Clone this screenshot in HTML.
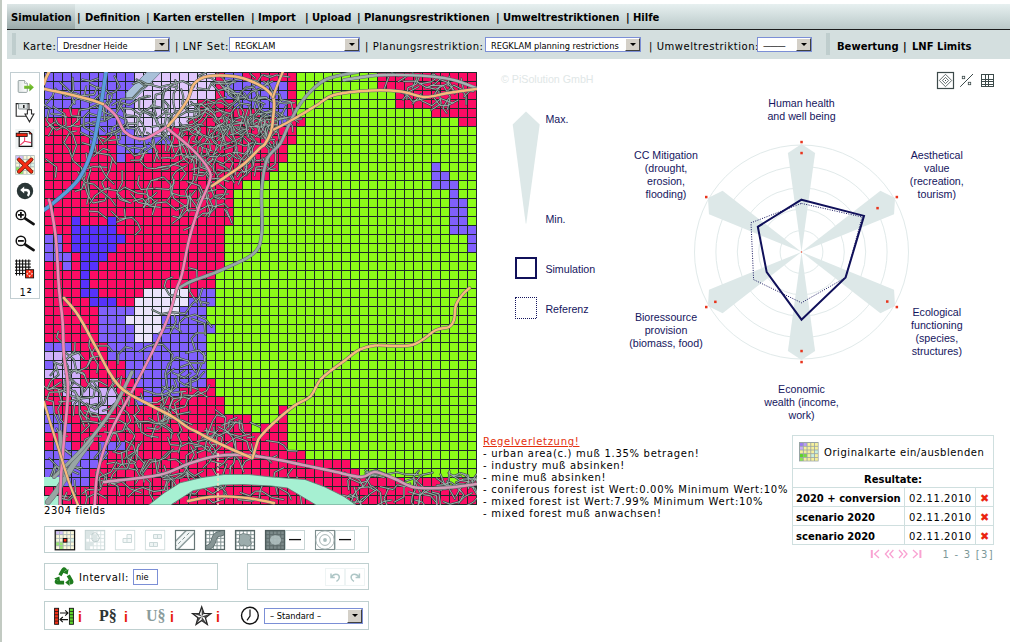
<!DOCTYPE html>
<html><head><meta charset="utf-8"><title>Simulation</title>
<style>
html,body{margin:0;padding:0;background:#fff;}
body{width:1010px;height:642px;position:relative;overflow:hidden;font-family:"DejaVu Sans",Verdana,sans-serif;font-size:10px;color:#000;}
.abs{position:absolute;}
.v{font-family:"DejaVu Sans",Verdana,sans-serif;font-size:10px;letter-spacing:0.55px;white-space:nowrap;line-height:12px;}
.vb{font-family:"DejaVu Sans",Verdana,sans-serif;font-weight:bold;font-size:10px;white-space:nowrap;line-height:12px;}
.t{font-family:"DejaVu Sans Condensed","DejaVu Sans",sans-serif;font-stretch:condensed;font-size:9.2px;white-space:nowrap;line-height:12px;}
#leftbar{left:0;top:0;width:2px;height:642px;background:#c2cac2;}
#menubar{left:7px;top:4px;width:1003px;height:25px;background:linear-gradient(#e7f0f0 0%,#d1dddd 48%,#bbc9c9 100%);border-bottom:1px solid #1c1c1c;}
#tab{left:0;top:0;width:68px;height:25px;background:linear-gradient(#dce6e6 0%,#bac6c6 50%,#9aaaaa 100%);}
#menubar>span{position:absolute;top:8px;}
#bar2{left:7px;top:30px;width:1003px;height:29px;background:#d4dfdf;}
#bar2>span{position:absolute;top:10.5px;}
.handle{position:absolute;top:3px;width:4px;height:22px;background-image:radial-gradient(circle,#9cb0b0 0.55px,transparent 0.8px);background-size:2px 2px;}
.sel{position:absolute;height:13px;background:#fff;border:1px solid #7b8fd6;box-sizing:content-box;overflow:hidden;}
.sel .txt{position:absolute;left:5px;top:1.5px;}
.sel .btn{position:absolute;right:0;top:0;width:15px;height:13px;background:#d4d0c8;border-top:1px solid #fff;border-left:1px solid #fff;border-right:1px solid #404040;border-bottom:1px solid #404040;box-sizing:border-box;}
.sel .btn:after{content:"";position:absolute;left:3.5px;top:4px;border-left:3px solid transparent;border-right:3px solid transparent;border-top:3px solid #000;}
.box{position:absolute;border:1px solid #bfd0d0;background:#fff;box-sizing:border-box;}
.redi{position:absolute;font-family:"Liberation Sans",Arial,sans-serif;font-weight:bold;font-size:14px;color:#e8200c;line-height:14px;margin-top:1.5px;}
table.res{position:absolute;left:792px;top:435px;border-collapse:collapse;}
table.res td{border:1px solid #cfdfdf;padding:0;}
table.res tr+tr span{position:relative;top:1.5px;}
.x{font-family:"DejaVu Sans",sans-serif;font-size:11px;line-height:12px;color:#ea2410;}
</style></head><body>
<div id="leftbar" class="abs"></div>
<div id="menubar" class="abs"><div id="tab" class="abs"></div>
<span class="vb" style="left:4px">Simulation</span><span class="vb" style="left:70px">|</span>
<span class="vb" style="left:78px">Definition</span><span class="vb" style="left:139px">|</span>
<span class="vb" style="left:146px">Karten erstellen</span><span class="vb" style="left:244px">|</span>
<span class="vb" style="left:251px">Import</span><span class="vb" style="left:298px">|</span>
<span class="vb" style="left:305px">Upload</span><span class="vb" style="left:350px">|</span>
<span class="vb" style="left:357px">Planungsrestriktionen</span><span class="vb" style="left:489px">|</span>
<span class="vb" style="left:496px">Umweltrestriktionen</span><span class="vb" style="left:619px">|</span>
<span class="vb" style="left:626px">Hilfe</span>
</div>
<div id="bar2" class="abs">
<div class="handle" style="left:5px"></div>
<span class="v" style="left:16px">Karte:</span>
<div class="sel" style="left:50px;top:7px;width:111px"><span class="t txt">Dresdner Heide</span><div class="btn"></div></div>
<span class="v" style="left:168px">| LNF Set:</span>
<div class="sel" style="left:222px;top:7px;width:129px"><span class="t txt">REGKLAM</span><div class="btn"></div></div>
<span class="v" style="left:358px">| Planungsrestriktion:</span>
<div class="sel" style="left:478px;top:7px;width:154px"><span class="t txt">REGKLAM planning restrictions</span><div class="btn"></div></div>
<span class="v" style="left:642px">| Umweltrestriktion:</span>
<div class="sel" style="left:750px;top:7px;width:53px"><span class="t txt" style="letter-spacing:-1px">———</span><div class="btn"></div></div>
<div class="handle" style="left:819px"></div>
<span class="vb" style="left:830px">Bewertung</span><span class="vb" style="left:896px">|</span><span class="vb" style="left:905px">LNF Limits</span>
</div>

<!-- left toolbar -->
<div class="box" style="left:10px;top:72px;width:30px;height:227px;border-color:#c2ced2"></div>

<svg id="map" width="433" height="433" viewBox="0 0 433 433" style="position:absolute;left:44px;top:72px">
<g shape-rendering="crispEdges">
<rect x="0" y="0" width="91" height="10" fill="#8060fc"/>
<rect x="90" y="0" width="82" height="10" fill="#e0c8fc"/>
<rect x="171" y="0" width="10" height="10" fill="#fc0c64"/>
<rect x="180" y="0" width="19" height="10" fill="#8060fc"/>
<rect x="198" y="0" width="55" height="10" fill="#fc0c64"/>
<rect x="252" y="0" width="82" height="10" fill="#8cfc18"/>
<rect x="333" y="0" width="100" height="10" fill="#fc0c64"/>
<rect x="0" y="9" width="91" height="10" fill="#8060fc"/>
<rect x="90" y="9" width="82" height="10" fill="#e0c8fc"/>
<rect x="171" y="9" width="10" height="10" fill="#fc0c64"/>
<rect x="180" y="9" width="64" height="10" fill="#8060fc"/>
<rect x="243" y="9" width="10" height="10" fill="#fc0c64"/>
<rect x="252" y="9" width="82" height="10" fill="#8cfc18"/>
<rect x="333" y="9" width="100" height="10" fill="#fc0c64"/>
<rect x="0" y="18" width="91" height="10" fill="#8060fc"/>
<rect x="90" y="18" width="82" height="10" fill="#e0c8fc"/>
<rect x="171" y="18" width="10" height="10" fill="#fc0c64"/>
<rect x="180" y="18" width="64" height="10" fill="#8060fc"/>
<rect x="243" y="18" width="10" height="10" fill="#fc0c64"/>
<rect x="252" y="18" width="100" height="10" fill="#8cfc18"/>
<rect x="351" y="18" width="82" height="10" fill="#fc0c64"/>
<rect x="0" y="27" width="91" height="10" fill="#8060fc"/>
<rect x="90" y="27" width="64" height="10" fill="#e0c8fc"/>
<rect x="153" y="27" width="37" height="10" fill="#fc0c64"/>
<rect x="189" y="27" width="55" height="10" fill="#8060fc"/>
<rect x="243" y="27" width="10" height="10" fill="#fc0c64"/>
<rect x="252" y="27" width="100" height="10" fill="#8cfc18"/>
<rect x="351" y="27" width="82" height="10" fill="#fc0c64"/>
<rect x="0" y="36" width="19" height="10" fill="#8060fc"/>
<rect x="18" y="36" width="19" height="10" fill="#fc0c64"/>
<rect x="36" y="36" width="46" height="10" fill="#8060fc"/>
<rect x="81" y="36" width="73" height="10" fill="#e0c8fc"/>
<rect x="153" y="36" width="64" height="10" fill="#fc0c64"/>
<rect x="216" y="36" width="28" height="10" fill="#8060fc"/>
<rect x="243" y="36" width="10" height="10" fill="#fc0c64"/>
<rect x="252" y="36" width="136" height="10" fill="#8cfc18"/>
<rect x="387" y="36" width="46" height="10" fill="#fc0c64"/>
<rect x="0" y="45" width="37" height="10" fill="#fc0c64"/>
<rect x="36" y="45" width="46" height="10" fill="#8060fc"/>
<rect x="81" y="45" width="64" height="10" fill="#e0c8fc"/>
<rect x="144" y="45" width="91" height="10" fill="#fc0c64"/>
<rect x="234" y="45" width="10" height="10" fill="#8060fc"/>
<rect x="243" y="45" width="19" height="10" fill="#fc0c64"/>
<rect x="261" y="45" width="154" height="10" fill="#8cfc18"/>
<rect x="414" y="45" width="19" height="10" fill="#fc0c64"/>
<rect x="0" y="54" width="37" height="10" fill="#fc0c64"/>
<rect x="36" y="54" width="55" height="10" fill="#8060fc"/>
<rect x="90" y="54" width="37" height="10" fill="#e0c8fc"/>
<rect x="126" y="54" width="127" height="10" fill="#fc0c64"/>
<rect x="252" y="54" width="181" height="10" fill="#8cfc18"/>
<rect x="0" y="63" width="46" height="10" fill="#fc0c64"/>
<rect x="45" y="63" width="10" height="10" fill="#8060fc"/>
<rect x="54" y="63" width="19" height="10" fill="#fc0c64"/>
<rect x="72" y="63" width="55" height="10" fill="#8060fc"/>
<rect x="126" y="63" width="127" height="10" fill="#fc0c64"/>
<rect x="252" y="63" width="181" height="10" fill="#8cfc18"/>
<rect x="0" y="72" width="73" height="10" fill="#fc0c64"/>
<rect x="72" y="72" width="37" height="10" fill="#8060fc"/>
<rect x="108" y="72" width="136" height="10" fill="#fc0c64"/>
<rect x="243" y="72" width="190" height="10" fill="#8cfc18"/>
<rect x="0" y="81" width="73" height="10" fill="#fc0c64"/>
<rect x="72" y="81" width="10" height="10" fill="#8060fc"/>
<rect x="81" y="81" width="163" height="10" fill="#fc0c64"/>
<rect x="243" y="81" width="190" height="10" fill="#8cfc18"/>
<rect x="0" y="90" width="235" height="10" fill="#fc0c64"/>
<rect x="234" y="90" width="154" height="10" fill="#8cfc18"/>
<rect x="387" y="90" width="10" height="10" fill="#8060fc"/>
<rect x="396" y="90" width="37" height="10" fill="#8cfc18"/>
<rect x="0" y="99" width="226" height="10" fill="#fc0c64"/>
<rect x="225" y="99" width="163" height="10" fill="#8cfc18"/>
<rect x="387" y="99" width="19" height="10" fill="#8060fc"/>
<rect x="405" y="99" width="28" height="10" fill="#8cfc18"/>
<rect x="0" y="108" width="199" height="10" fill="#fc0c64"/>
<rect x="198" y="108" width="190" height="10" fill="#8cfc18"/>
<rect x="387" y="108" width="28" height="10" fill="#8060fc"/>
<rect x="414" y="108" width="19" height="10" fill="#8cfc18"/>
<rect x="0" y="117" width="190" height="10" fill="#fc0c64"/>
<rect x="189" y="117" width="217" height="10" fill="#8cfc18"/>
<rect x="405" y="117" width="10" height="10" fill="#8060fc"/>
<rect x="414" y="117" width="19" height="10" fill="#8cfc18"/>
<rect x="0" y="126" width="190" height="10" fill="#fc0c64"/>
<rect x="189" y="126" width="217" height="10" fill="#8cfc18"/>
<rect x="405" y="126" width="19" height="10" fill="#8060fc"/>
<rect x="423" y="126" width="10" height="10" fill="#8cfc18"/>
<rect x="0" y="135" width="190" height="10" fill="#fc0c64"/>
<rect x="189" y="135" width="217" height="10" fill="#8cfc18"/>
<rect x="405" y="135" width="19" height="10" fill="#8060fc"/>
<rect x="423" y="135" width="10" height="10" fill="#8cfc18"/>
<rect x="0" y="144" width="28" height="10" fill="#fc0c64"/>
<rect x="27" y="144" width="10" height="10" fill="#5632fc"/>
<rect x="36" y="144" width="28" height="10" fill="#fc0c64"/>
<rect x="63" y="144" width="10" height="10" fill="#5632fc"/>
<rect x="72" y="144" width="118" height="10" fill="#fc0c64"/>
<rect x="189" y="144" width="217" height="10" fill="#8cfc18"/>
<rect x="405" y="144" width="19" height="10" fill="#8060fc"/>
<rect x="423" y="144" width="10" height="10" fill="#8cfc18"/>
<rect x="0" y="153" width="28" height="10" fill="#fc0c64"/>
<rect x="27" y="153" width="46" height="10" fill="#5632fc"/>
<rect x="72" y="153" width="109" height="10" fill="#fc0c64"/>
<rect x="180" y="153" width="226" height="10" fill="#8cfc18"/>
<rect x="405" y="153" width="28" height="10" fill="#8060fc"/>
<rect x="0" y="162" width="19" height="10" fill="#8060fc"/>
<rect x="18" y="162" width="10" height="10" fill="#fc0c64"/>
<rect x="27" y="162" width="55" height="10" fill="#5632fc"/>
<rect x="81" y="162" width="100" height="10" fill="#fc0c64"/>
<rect x="180" y="162" width="244" height="10" fill="#8cfc18"/>
<rect x="423" y="162" width="10" height="10" fill="#8060fc"/>
<rect x="0" y="171" width="19" height="10" fill="#8060fc"/>
<rect x="18" y="171" width="10" height="10" fill="#fc0c64"/>
<rect x="27" y="171" width="46" height="10" fill="#5632fc"/>
<rect x="72" y="171" width="109" height="10" fill="#fc0c64"/>
<rect x="180" y="171" width="244" height="10" fill="#8cfc18"/>
<rect x="423" y="171" width="10" height="10" fill="#8060fc"/>
<rect x="0" y="180" width="28" height="10" fill="#8060fc"/>
<rect x="27" y="180" width="10" height="10" fill="#fc0c64"/>
<rect x="36" y="180" width="28" height="10" fill="#5632fc"/>
<rect x="63" y="180" width="118" height="10" fill="#fc0c64"/>
<rect x="180" y="180" width="253" height="10" fill="#8cfc18"/>
<rect x="0" y="189" width="19" height="10" fill="#fc0c64"/>
<rect x="18" y="189" width="10" height="10" fill="#8060fc"/>
<rect x="27" y="189" width="10" height="10" fill="#fc0c64"/>
<rect x="36" y="189" width="19" height="10" fill="#5632fc"/>
<rect x="54" y="189" width="127" height="10" fill="#fc0c64"/>
<rect x="180" y="189" width="253" height="10" fill="#8cfc18"/>
<rect x="0" y="198" width="37" height="10" fill="#fc0c64"/>
<rect x="36" y="198" width="10" height="10" fill="#5632fc"/>
<rect x="45" y="198" width="127" height="10" fill="#fc0c64"/>
<rect x="171" y="198" width="262" height="10" fill="#8cfc18"/>
<rect x="0" y="207" width="37" height="10" fill="#fc0c64"/>
<rect x="36" y="207" width="10" height="10" fill="#5632fc"/>
<rect x="45" y="207" width="127" height="10" fill="#fc0c64"/>
<rect x="171" y="207" width="262" height="10" fill="#8cfc18"/>
<rect x="0" y="216" width="37" height="10" fill="#fc0c64"/>
<rect x="36" y="216" width="19" height="10" fill="#5632fc"/>
<rect x="54" y="216" width="46" height="10" fill="#fc0c64"/>
<rect x="99" y="216" width="46" height="10" fill="#ece4fc"/>
<rect x="144" y="216" width="10" height="10" fill="#fc0c64"/>
<rect x="153" y="216" width="19" height="10" fill="#8060fc"/>
<rect x="171" y="216" width="262" height="10" fill="#8cfc18"/>
<rect x="0" y="225" width="46" height="10" fill="#fc0c64"/>
<rect x="45" y="225" width="28" height="10" fill="#5632fc"/>
<rect x="72" y="225" width="19" height="10" fill="#fc0c64"/>
<rect x="90" y="225" width="55" height="10" fill="#ece4fc"/>
<rect x="144" y="225" width="28" height="10" fill="#8060fc"/>
<rect x="171" y="225" width="262" height="10" fill="#8cfc18"/>
<rect x="0" y="234" width="55" height="10" fill="#fc0c64"/>
<rect x="54" y="234" width="37" height="10" fill="#8060fc"/>
<rect x="90" y="234" width="46" height="10" fill="#ece4fc"/>
<rect x="135" y="234" width="28" height="10" fill="#8060fc"/>
<rect x="162" y="234" width="271" height="10" fill="#8cfc18"/>
<rect x="0" y="243" width="55" height="10" fill="#fc0c64"/>
<rect x="54" y="243" width="28" height="10" fill="#8060fc"/>
<rect x="81" y="243" width="37" height="10" fill="#ece4fc"/>
<rect x="117" y="243" width="46" height="10" fill="#8060fc"/>
<rect x="162" y="243" width="271" height="10" fill="#8cfc18"/>
<rect x="0" y="252" width="55" height="10" fill="#fc0c64"/>
<rect x="54" y="252" width="37" height="10" fill="#8060fc"/>
<rect x="90" y="252" width="28" height="10" fill="#ece4fc"/>
<rect x="117" y="252" width="55" height="10" fill="#8060fc"/>
<rect x="171" y="252" width="262" height="10" fill="#8cfc18"/>
<rect x="0" y="261" width="55" height="10" fill="#fc0c64"/>
<rect x="54" y="261" width="37" height="10" fill="#8060fc"/>
<rect x="90" y="261" width="19" height="10" fill="#ece4fc"/>
<rect x="108" y="261" width="55" height="10" fill="#8060fc"/>
<rect x="162" y="261" width="271" height="10" fill="#8cfc18"/>
<rect x="0" y="270" width="28" height="10" fill="#8060fc"/>
<rect x="27" y="270" width="37" height="10" fill="#fc0c64"/>
<rect x="63" y="270" width="100" height="10" fill="#8060fc"/>
<rect x="162" y="270" width="271" height="10" fill="#8cfc18"/>
<rect x="0" y="279" width="37" height="10" fill="#d0b0fc"/>
<rect x="36" y="279" width="28" height="10" fill="#fc0c64"/>
<rect x="63" y="279" width="100" height="10" fill="#8060fc"/>
<rect x="162" y="279" width="271" height="10" fill="#8cfc18"/>
<rect x="0" y="288" width="10" height="10" fill="#8060fc"/>
<rect x="9" y="288" width="28" height="10" fill="#d0b0fc"/>
<rect x="36" y="288" width="46" height="10" fill="#fc0c64"/>
<rect x="81" y="288" width="82" height="10" fill="#8060fc"/>
<rect x="162" y="288" width="271" height="10" fill="#8cfc18"/>
<rect x="0" y="297" width="37" height="10" fill="#d0b0fc"/>
<rect x="36" y="297" width="46" height="10" fill="#fc0c64"/>
<rect x="81" y="297" width="82" height="10" fill="#8060fc"/>
<rect x="162" y="297" width="271" height="10" fill="#8cfc18"/>
<rect x="0" y="306" width="19" height="10" fill="#fc0c64"/>
<rect x="18" y="306" width="19" height="10" fill="#d0b0fc"/>
<rect x="36" y="306" width="10" height="10" fill="#fc0c64"/>
<rect x="45" y="306" width="10" height="10" fill="#d0b0fc"/>
<rect x="54" y="306" width="37" height="10" fill="#fc0c64"/>
<rect x="90" y="306" width="73" height="10" fill="#8060fc"/>
<rect x="162" y="306" width="10" height="10" fill="#fc0c64"/>
<rect x="171" y="306" width="262" height="10" fill="#8cfc18"/>
<rect x="0" y="315" width="19" height="10" fill="#fc0c64"/>
<rect x="18" y="315" width="55" height="10" fill="#d0b0fc"/>
<rect x="72" y="315" width="28" height="10" fill="#fc0c64"/>
<rect x="99" y="315" width="37" height="10" fill="#8060fc"/>
<rect x="135" y="315" width="37" height="10" fill="#fc0c64"/>
<rect x="171" y="315" width="262" height="10" fill="#8cfc18"/>
<rect x="0" y="324" width="28" height="10" fill="#fc0c64"/>
<rect x="27" y="324" width="46" height="10" fill="#d0b0fc"/>
<rect x="72" y="324" width="19" height="10" fill="#fc0c64"/>
<rect x="90" y="324" width="19" height="10" fill="#8060fc"/>
<rect x="108" y="324" width="73" height="10" fill="#fc0c64"/>
<rect x="180" y="324" width="253" height="10" fill="#8cfc18"/>
<rect x="0" y="333" width="10" height="10" fill="#8060fc"/>
<rect x="9" y="333" width="37" height="10" fill="#fc0c64"/>
<rect x="45" y="333" width="19" height="10" fill="#d0b0fc"/>
<rect x="63" y="333" width="118" height="10" fill="#fc0c64"/>
<rect x="180" y="333" width="55" height="10" fill="#8cfc18"/>
<rect x="234" y="333" width="10" height="10" fill="#fc0c64"/>
<rect x="243" y="333" width="190" height="10" fill="#8cfc18"/>
<rect x="0" y="342" width="19" height="10" fill="#8060fc"/>
<rect x="18" y="342" width="190" height="10" fill="#fc0c64"/>
<rect x="207" y="342" width="28" height="10" fill="#8cfc18"/>
<rect x="234" y="342" width="10" height="10" fill="#fc0c64"/>
<rect x="243" y="342" width="190" height="10" fill="#8cfc18"/>
<rect x="0" y="351" width="28" height="10" fill="#8060fc"/>
<rect x="27" y="351" width="181" height="10" fill="#fc0c64"/>
<rect x="207" y="351" width="10" height="10" fill="#8cfc18"/>
<rect x="216" y="351" width="28" height="10" fill="#fc0c64"/>
<rect x="243" y="351" width="190" height="10" fill="#8cfc18"/>
<rect x="0" y="360" width="244" height="10" fill="#fc0c64"/>
<rect x="243" y="360" width="190" height="10" fill="#8cfc18"/>
<rect x="0" y="369" width="10" height="10" fill="#fc0c64"/>
<rect x="9" y="369" width="19" height="10" fill="#8060fc"/>
<rect x="27" y="369" width="28" height="10" fill="#fc0c64"/>
<rect x="54" y="369" width="28" height="10" fill="#8060fc"/>
<rect x="81" y="369" width="163" height="10" fill="#fc0c64"/>
<rect x="243" y="369" width="190" height="10" fill="#8cfc18"/>
<rect x="0" y="378" width="64" height="10" fill="#8060fc"/>
<rect x="63" y="378" width="199" height="10" fill="#fc0c64"/>
<rect x="261" y="378" width="172" height="10" fill="#8cfc18"/>
<rect x="0" y="387" width="55" height="10" fill="#8060fc"/>
<rect x="54" y="387" width="253" height="10" fill="#fc0c64"/>
<rect x="306" y="387" width="127" height="10" fill="#8cfc18"/>
<rect x="0" y="396" width="46" height="10" fill="#8060fc"/>
<rect x="45" y="396" width="271" height="10" fill="#fc0c64"/>
<rect x="315" y="396" width="118" height="10" fill="#8cfc18"/>
<rect x="0" y="405" width="19" height="10" fill="#a4f0d0"/>
<rect x="18" y="405" width="28" height="10" fill="#8060fc"/>
<rect x="45" y="405" width="316" height="10" fill="#fc0c64"/>
<rect x="360" y="405" width="10" height="10" fill="#8cfc18"/>
<rect x="369" y="405" width="37" height="10" fill="#fc0c64"/>
<rect x="405" y="405" width="10" height="10" fill="#8cfc18"/>
<rect x="414" y="405" width="19" height="10" fill="#fc0c64"/>
<rect x="0" y="414" width="433" height="10" fill="#fc0c64"/>
<rect x="0" y="423" width="19" height="10" fill="#a4f0d0"/>
<rect x="18" y="423" width="415" height="10" fill="#fc0c64"/>
<path d="M0.5 0V433M0 0.5H433M9.5 0V433M0 9.5H433M18.5 0V433M0 18.5H433M27.5 0V433M0 27.5H433M36.5 0V433M0 36.5H433M45.5 0V433M0 45.5H433M54.5 0V433M0 54.5H433M63.5 0V433M0 63.5H433M72.5 0V433M0 72.5H433M81.5 0V433M0 81.5H433M90.5 0V433M0 90.5H433M99.5 0V433M0 99.5H433M108.5 0V433M0 108.5H433M117.5 0V433M0 117.5H433M126.5 0V433M0 126.5H433M135.5 0V433M0 135.5H433M144.5 0V433M0 144.5H433M153.5 0V433M0 153.5H433M162.5 0V433M0 162.5H433M171.5 0V433M0 171.5H433M180.5 0V433M0 180.5H433M189.5 0V433M0 189.5H433M198.5 0V433M0 198.5H433M207.5 0V433M0 207.5H433M216.5 0V433M0 216.5H433M225.5 0V433M0 225.5H433M234.5 0V433M0 234.5H433M243.5 0V433M0 243.5H433M252.5 0V433M0 252.5H433M261.5 0V433M0 261.5H433M270.5 0V433M0 270.5H433M279.5 0V433M0 279.5H433M288.5 0V433M0 288.5H433M297.5 0V433M0 297.5H433M306.5 0V433M0 306.5H433M315.5 0V433M0 315.5H433M324.5 0V433M0 324.5H433M333.5 0V433M0 333.5H433M342.5 0V433M0 342.5H433M351.5 0V433M0 351.5H433M360.5 0V433M0 360.5H433M369.5 0V433M0 369.5H433M378.5 0V433M0 378.5H433M387.5 0V433M0 387.5H433M396.5 0V433M0 396.5H433M405.5 0V433M0 405.5H433M414.5 0V433M0 414.5H433M423.5 0V433M0 423.5H433M432.5 0V433M0 432.5H433" stroke="#1e2a2a" stroke-width="1" fill="none"/>
</g>
<g clip-path="url(#mapclip)"><defs><clipPath id="mapclip"><rect x="0" y="0" width="433" height="433"/></clipPath></defs>
<path d="M82 21L103 0L117 0L90 28L82 28Z" fill="#a9c1d9" stroke="#6c7c88" stroke-width="0.8"/>
<path d="M22.7 44.9 L16.6 42.7 L7.2 41.7M4.9 38.2 L2.7 48.6 L8.2 56.0M68.3 33.2 L74.3 29.7 L85.3 32.9 L94.8 27.1 L106.1 24.2M39.5 97.3 L29.2 88.8 L24.9 77.2 L19.9 70.5 L25.8 60.2 L32.3 59.0M35.8 46.5 L27.5 54.2 L18.9 55.7 L11.3 49.8 L3.0 55.1M45.3 139.2 L54.1 139.7 L62.7 146.3M9.1 55.7 L4.6 63.8M60.5 59.2 L55.1 54.4 L44.5 50.5 L34.5 54.5 L27.4 53.5M37.4 96.3 L40.9 108.8 L37.6 117.3 L31.4 119.3M4.7 51.4 L12.7 58.2 L22.1 52.6 L20.7 41.8 L9.0 34.7M42.2 81.1 L43.2 89.5 L46.8 97.5 L43.4 108.5 L45.2 122.0 L42.8 132.1M1.9 87.1 L12.6 95.0 L11.4 105.2M54.5 64.9 L65.9 68.5 L75.8 67.3 L77.8 55.1M33.1 49.7 L35.2 38.1 L44.0 36.8 L52.8 32.6 L63.7 32.2M63.0 122.1 L60.8 128.7 L49.0 131.0 L43.8 123.0 L40.0 110.0M50.5 79.9 L47.6 73.5 L38.3 70.7" stroke="#364240" stroke-width="2.1" fill="none" stroke-linejoin="round" stroke-linecap="round"/>
<path d="M22.7 44.9 L16.6 42.7 L7.2 41.7M4.9 38.2 L2.7 48.6 L8.2 56.0M68.3 33.2 L74.3 29.7 L85.3 32.9 L94.8 27.1 L106.1 24.2M39.5 97.3 L29.2 88.8 L24.9 77.2 L19.9 70.5 L25.8 60.2 L32.3 59.0M35.8 46.5 L27.5 54.2 L18.9 55.7 L11.3 49.8 L3.0 55.1M45.3 139.2 L54.1 139.7 L62.7 146.3M9.1 55.7 L4.6 63.8M60.5 59.2 L55.1 54.4 L44.5 50.5 L34.5 54.5 L27.4 53.5M37.4 96.3 L40.9 108.8 L37.6 117.3 L31.4 119.3M4.7 51.4 L12.7 58.2 L22.1 52.6 L20.7 41.8 L9.0 34.7M42.2 81.1 L43.2 89.5 L46.8 97.5 L43.4 108.5 L45.2 122.0 L42.8 132.1M1.9 87.1 L12.6 95.0 L11.4 105.2M54.5 64.9 L65.9 68.5 L75.8 67.3 L77.8 55.1M33.1 49.7 L35.2 38.1 L44.0 36.8 L52.8 32.6 L63.7 32.2M63.0 122.1 L60.8 128.7 L49.0 131.0 L43.8 123.0 L40.0 110.0M50.5 79.9 L47.6 73.5 L38.3 70.7" stroke="#a2b4b0" stroke-width="0.95" fill="none" stroke-linejoin="round" stroke-linecap="round"/>
<path d="M172.8 102.6 L167.0 94.0 L157.0 84.6 L143.5 84.8 L141.2 77.6 L137.3 71.0M146.2 121.2 L143.7 132.8 L132.3 138.1 L122.2 129.9 L112.1 131.0 L108.4 142.6M164.7 122.7 L162.9 129.4 L166.0 139.1 L161.3 144.1M156.4 58.3 L146.3 65.0 L143.1 75.4M147.0 90.5 L150.1 83.1 L163.2 83.7 L166.5 77.4 L165.3 69.0 L159.7 63.7M112.1 42.9 L109.9 36.2 L111.7 22.7 L118.8 20.8 L126.3 15.1M148.7 69.4 L154.7 70.8 L158.4 75.7 L157.4 84.0 L160.1 97.1M99.3 134.9 L105.2 130.3 L102.6 117.8 L107.1 108.5 L113.7 107.5M69.9 112.0 L61.9 104.3 L55.6 93.1M71.5 133.3 L66.6 126.7 L57.5 119.4 L50.8 123.9 L46.2 131.0M112.5 120.7 L107.9 124.8 L102.5 127.7 L100.1 135.3M136.9 108.3 L141.9 101.5 L136.7 94.5 L128.3 92.1 L124.2 96.6 L117.8 97.6M174.4 74.5 L170.6 79.5 L168.0 88.8 L161.4 94.3 L148.0 97.4M113.2 71.5 L120.8 64.9 L125.4 53.6 L124.6 46.9 L130.8 40.1 L138.3 37.8M160.7 92.6 L169.1 87.2 L179.2 91.7 L188.3 84.3 L200.2 88.2 L207.8 79.0M157.8 127.2 L164.8 126.2 L168.7 134.4 L164.7 144.7M167.7 111.0 L161.3 100.9 L154.8 100.3M186.7 58.8 L193.3 54.9 L202.2 56.8 L203.5 64.9 L213.1 70.6M73.3 46.0 L74.5 52.4 L68.5 55.6 L67.4 63.8 L60.1 70.2M80.4 137.0 L81.3 146.7 L72.9 150.0M72.8 39.0 L76.9 27.1 L88.5 26.4 L97.4 16.9 L102.5 13.6M144.6 83.0 L137.9 88.3 L127.1 93.6 L113.8 95.4M182.6 138.0 L187.9 151.0M107.3 33.9 L115.3 35.2 L122.9 40.1 L120.7 52.4 L107.4 55.0M154.5 115.8 L157.1 122.4 L152.6 134.9 L152.9 144.2 L147.3 154.7 L140.1 158.0M143.1 109.6 L155.7 113.8 L159.8 122.5 L152.5 128.8M84.0 51.5 L93.0 51.6 L97.8 40.7 L108.1 34.5 L111.6 26.6M70.7 61.9 L82.2 55.5 L91.7 56.8 L95.6 69.2M63.8 31.9 L63.3 22.8 L70.7 20.0 L75.8 14.8 L70.5 4.3M60.2 43.3 L61.6 32.4 L67.7 29.2M72.1 92.0 L66.0 83.1 L52.2 80.6 L50.6 69.6 L44.7 64.5 L36.4 60.2M171.7 34.7 L180.1 42.4 L182.5 48.2 L177.4 55.5 L166.9 61.9 L159.1 73.3M113.6 128.0 L107.0 133.1 L94.1 130.3 L86.9 121.6M223.2 45.9 L225.8 52.5 L233.1 54.1 L235.2 67.0M188.4 31.9 L194.8 24.9 L199.1 17.8 L211.3 13.1 L218.0 3.0 L227.4 4.2M68.5 85.8 L65.9 97.4 L61.9 105.8 L57.9 110.6 L60.4 116.6 L73.4 118.7M118.3 61.2 L126.7 69.1 L130.1 80.4M162.4 126.3 L163.3 119.5 L172.2 117.7M103.2 80.5 L90.2 83.8 L82.2 74.6 L74.0 72.1 L71.7 61.6 L66.2 56.8M130.1 107.2 L127.8 120.1 L129.9 126.5 L141.4 134.2 L145.3 140.1M139.3 136.7 L134.9 146.3 L128.5 151.3M135.6 50.7 L141.1 58.0 L148.9 59.2 L159.0 49.7 L166.5 39.0M99.8 82.7 L96.5 89.5 L102.8 95.9 L110.8 96.7 L121.3 94.4M166.6 54.6 L164.1 62.2 L172.9 71.1 L171.6 78.5M113.7 52.8 L109.3 41.3 L102.9 39.3 L95.2 41.9 L87.4 36.7 L76.9 36.1M121.4 78.8 L122.2 69.6 L118.2 63.6 L109.0 64.7 L103.0 60.7M62.6 95.3 L49.2 94.6 L41.3 97.1 L41.0 103.9 L30.1 109.8 L23.5 120.7M67.5 139.4 L75.3 147.1 L88.0 145.5 L93.5 150.7 L96.7 157.8 L91.4 162.7M121.8 46.2 L124.5 33.8 L118.8 27.3 L120.3 17.0M167.9 65.4 L159.0 64.2 L153.8 61.2 L150.6 52.2M166.4 127.9 L171.7 123.3 L184.1 122.0M218.6 66.3 L206.3 61.7 L199.8 60.8M165.6 112.5 L170.1 124.2 L181.5 127.1M190.1 47.4 L199.7 44.5 L207.7 45.6 L213.4 43.1 L218.9 33.4M107.9 68.0 L109.4 74.2 L101.2 79.3 L96.0 88.1 L87.0 88.3M124.6 73.0 L131.8 74.7 L141.5 71.8 L152.9 79.7 L152.4 91.7M98.1 63.5 L100.9 57.0 L98.0 51.3 L92.5 44.4 L82.3 43.2 L76.2 34.4M95.1 104.1 L93.7 111.9 L96.9 117.6 L109.1 116.4M129.1 60.2 L135.2 68.4 L137.3 81.4 L139.9 87.1 L144.9 91.1M194.0 29.5 L184.4 32.8 L179.0 27.7 L173.4 18.3M142.2 93.7 L132.3 99.0 L128.3 104.6 L130.2 111.3 L125.0 117.5 L111.7 116.4M227.2 64.1 L226.9 57.9 L238.5 52.7 L237.4 40.8M116.2 135.4 L105.3 134.0 L98.4 126.4 L89.4 129.2M184.6 97.6 L178.4 99.7 L173.5 103.6 L173.5 110.9M65.3 44.9 L58.8 45.6 L45.8 41.4M151.8 109.0 L154.4 101.8 L155.8 89.1 L146.4 83.2 L144.5 76.4 L138.3 70.3M104.9 70.8 L113.7 79.2 L110.2 89.6M65.3 78.4 L59.3 76.4 L49.4 84.2M158.8 63.0 L147.7 54.8 L141.0 54.4 L137.2 64.5M224.6 90.8 L224.9 77.3 L220.3 72.2 L206.4 70.8M156.5 40.8 L143.5 39.0 L133.9 44.7M124.0 65.0 L116.5 56.8 L112.3 46.9 L105.1 42.2M86.7 130.9 L75.7 127.4 L72.9 121.0 L78.2 110.7 L78.1 98.7M202.2 103.3 L207.8 96.6 L208.8 89.1 L206.1 78.2M93.6 46.4 L93.3 54.0 L99.2 65.6 L101.3 74.6 L94.7 82.0M168.8 84.5 L181.9 82.9 L189.0 90.9 L184.5 101.3 L190.3 110.9M180.5 137.2 L185.2 145.3M149.1 108.7 L150.6 98.8 L149.6 88.5 L137.5 82.2 L131.0 84.1M158.8 94.0 L163.8 86.2 L173.5 80.0M127.5 121.0 L136.2 123.7 L145.5 124.4 L152.0 133.8 L154.3 141.9M128.9 144.3 L135.7 146.1 L143.1 137.9 L154.8 138.7 L164.5 133.2 L172.7 134.8M154.3 43.3 L154.6 34.3 L165.6 31.4 L177.4 30.7 L187.0 36.5M115.1 87.2 L111.6 79.5 L109.5 67.0M84.1 129.4 L78.1 126.8 L73.8 121.6M84.5 56.5 L82.1 47.6 L71.7 42.7 L60.2 49.0 L48.7 50.0M151.3 118.5 L146.3 124.6 L146.5 135.0M143.3 138.5 L144.1 127.7 L141.5 119.5 L148.9 109.2M124.5 79.1 L129.0 69.0 L130.3 62.7M65.8 115.6 L57.5 118.8 L49.5 112.1 L40.9 110.5 L34.0 99.9M110.4 129.0 L101.6 122.0 L93.1 121.1 L80.6 115.2 L75.5 118.9M184.3 136.0 L180.2 131.6 L170.8 134.4M191.7 35.3 L184.4 44.3 L181.6 55.3 L174.9 58.3 L175.0 67.7 L185.6 71.6M123.4 128.4 L127.2 123.3 L126.7 112.2 L119.5 105.0 L110.5 107.5M179.7 77.4 L188.5 74.6 L196.7 69.2 L197.5 59.8 L192.2 55.2 L185.5 53.4M141.2 61.6 L134.9 67.9 L136.3 74.4 L129.9 86.3 L123.6 85.5 L117.5 86.0M171.9 127.7 L172.4 135.0 L166.3 141.0 L159.0 141.3 L150.1 148.1M168.3 79.0 L158.4 75.4 L151.2 67.2 L156.2 56.5 L149.4 48.0 L151.7 34.4M102.3 75.3 L96.5 76.8 L89.5 75.2 L82.6 77.2" stroke="#364240" stroke-width="2.1" fill="none" stroke-linejoin="round" stroke-linecap="round"/>
<path d="M172.8 102.6 L167.0 94.0 L157.0 84.6 L143.5 84.8 L141.2 77.6 L137.3 71.0M146.2 121.2 L143.7 132.8 L132.3 138.1 L122.2 129.9 L112.1 131.0 L108.4 142.6M164.7 122.7 L162.9 129.4 L166.0 139.1 L161.3 144.1M156.4 58.3 L146.3 65.0 L143.1 75.4M147.0 90.5 L150.1 83.1 L163.2 83.7 L166.5 77.4 L165.3 69.0 L159.7 63.7M112.1 42.9 L109.9 36.2 L111.7 22.7 L118.8 20.8 L126.3 15.1M148.7 69.4 L154.7 70.8 L158.4 75.7 L157.4 84.0 L160.1 97.1M99.3 134.9 L105.2 130.3 L102.6 117.8 L107.1 108.5 L113.7 107.5M69.9 112.0 L61.9 104.3 L55.6 93.1M71.5 133.3 L66.6 126.7 L57.5 119.4 L50.8 123.9 L46.2 131.0M112.5 120.7 L107.9 124.8 L102.5 127.7 L100.1 135.3M136.9 108.3 L141.9 101.5 L136.7 94.5 L128.3 92.1 L124.2 96.6 L117.8 97.6M174.4 74.5 L170.6 79.5 L168.0 88.8 L161.4 94.3 L148.0 97.4M113.2 71.5 L120.8 64.9 L125.4 53.6 L124.6 46.9 L130.8 40.1 L138.3 37.8M160.7 92.6 L169.1 87.2 L179.2 91.7 L188.3 84.3 L200.2 88.2 L207.8 79.0M157.8 127.2 L164.8 126.2 L168.7 134.4 L164.7 144.7M167.7 111.0 L161.3 100.9 L154.8 100.3M186.7 58.8 L193.3 54.9 L202.2 56.8 L203.5 64.9 L213.1 70.6M73.3 46.0 L74.5 52.4 L68.5 55.6 L67.4 63.8 L60.1 70.2M80.4 137.0 L81.3 146.7 L72.9 150.0M72.8 39.0 L76.9 27.1 L88.5 26.4 L97.4 16.9 L102.5 13.6M144.6 83.0 L137.9 88.3 L127.1 93.6 L113.8 95.4M182.6 138.0 L187.9 151.0M107.3 33.9 L115.3 35.2 L122.9 40.1 L120.7 52.4 L107.4 55.0M154.5 115.8 L157.1 122.4 L152.6 134.9 L152.9 144.2 L147.3 154.7 L140.1 158.0M143.1 109.6 L155.7 113.8 L159.8 122.5 L152.5 128.8M84.0 51.5 L93.0 51.6 L97.8 40.7 L108.1 34.5 L111.6 26.6M70.7 61.9 L82.2 55.5 L91.7 56.8 L95.6 69.2M63.8 31.9 L63.3 22.8 L70.7 20.0 L75.8 14.8 L70.5 4.3M60.2 43.3 L61.6 32.4 L67.7 29.2M72.1 92.0 L66.0 83.1 L52.2 80.6 L50.6 69.6 L44.7 64.5 L36.4 60.2M171.7 34.7 L180.1 42.4 L182.5 48.2 L177.4 55.5 L166.9 61.9 L159.1 73.3M113.6 128.0 L107.0 133.1 L94.1 130.3 L86.9 121.6M223.2 45.9 L225.8 52.5 L233.1 54.1 L235.2 67.0M188.4 31.9 L194.8 24.9 L199.1 17.8 L211.3 13.1 L218.0 3.0 L227.4 4.2M68.5 85.8 L65.9 97.4 L61.9 105.8 L57.9 110.6 L60.4 116.6 L73.4 118.7M118.3 61.2 L126.7 69.1 L130.1 80.4M162.4 126.3 L163.3 119.5 L172.2 117.7M103.2 80.5 L90.2 83.8 L82.2 74.6 L74.0 72.1 L71.7 61.6 L66.2 56.8M130.1 107.2 L127.8 120.1 L129.9 126.5 L141.4 134.2 L145.3 140.1M139.3 136.7 L134.9 146.3 L128.5 151.3M135.6 50.7 L141.1 58.0 L148.9 59.2 L159.0 49.7 L166.5 39.0M99.8 82.7 L96.5 89.5 L102.8 95.9 L110.8 96.7 L121.3 94.4M166.6 54.6 L164.1 62.2 L172.9 71.1 L171.6 78.5M113.7 52.8 L109.3 41.3 L102.9 39.3 L95.2 41.9 L87.4 36.7 L76.9 36.1M121.4 78.8 L122.2 69.6 L118.2 63.6 L109.0 64.7 L103.0 60.7M62.6 95.3 L49.2 94.6 L41.3 97.1 L41.0 103.9 L30.1 109.8 L23.5 120.7M67.5 139.4 L75.3 147.1 L88.0 145.5 L93.5 150.7 L96.7 157.8 L91.4 162.7M121.8 46.2 L124.5 33.8 L118.8 27.3 L120.3 17.0M167.9 65.4 L159.0 64.2 L153.8 61.2 L150.6 52.2M166.4 127.9 L171.7 123.3 L184.1 122.0M218.6 66.3 L206.3 61.7 L199.8 60.8M165.6 112.5 L170.1 124.2 L181.5 127.1M190.1 47.4 L199.7 44.5 L207.7 45.6 L213.4 43.1 L218.9 33.4M107.9 68.0 L109.4 74.2 L101.2 79.3 L96.0 88.1 L87.0 88.3M124.6 73.0 L131.8 74.7 L141.5 71.8 L152.9 79.7 L152.4 91.7M98.1 63.5 L100.9 57.0 L98.0 51.3 L92.5 44.4 L82.3 43.2 L76.2 34.4M95.1 104.1 L93.7 111.9 L96.9 117.6 L109.1 116.4M129.1 60.2 L135.2 68.4 L137.3 81.4 L139.9 87.1 L144.9 91.1M194.0 29.5 L184.4 32.8 L179.0 27.7 L173.4 18.3M142.2 93.7 L132.3 99.0 L128.3 104.6 L130.2 111.3 L125.0 117.5 L111.7 116.4M227.2 64.1 L226.9 57.9 L238.5 52.7 L237.4 40.8M116.2 135.4 L105.3 134.0 L98.4 126.4 L89.4 129.2M184.6 97.6 L178.4 99.7 L173.5 103.6 L173.5 110.9M65.3 44.9 L58.8 45.6 L45.8 41.4M151.8 109.0 L154.4 101.8 L155.8 89.1 L146.4 83.2 L144.5 76.4 L138.3 70.3M104.9 70.8 L113.7 79.2 L110.2 89.6M65.3 78.4 L59.3 76.4 L49.4 84.2M158.8 63.0 L147.7 54.8 L141.0 54.4 L137.2 64.5M224.6 90.8 L224.9 77.3 L220.3 72.2 L206.4 70.8M156.5 40.8 L143.5 39.0 L133.9 44.7M124.0 65.0 L116.5 56.8 L112.3 46.9 L105.1 42.2M86.7 130.9 L75.7 127.4 L72.9 121.0 L78.2 110.7 L78.1 98.7M202.2 103.3 L207.8 96.6 L208.8 89.1 L206.1 78.2M93.6 46.4 L93.3 54.0 L99.2 65.6 L101.3 74.6 L94.7 82.0M168.8 84.5 L181.9 82.9 L189.0 90.9 L184.5 101.3 L190.3 110.9M180.5 137.2 L185.2 145.3M149.1 108.7 L150.6 98.8 L149.6 88.5 L137.5 82.2 L131.0 84.1M158.8 94.0 L163.8 86.2 L173.5 80.0M127.5 121.0 L136.2 123.7 L145.5 124.4 L152.0 133.8 L154.3 141.9M128.9 144.3 L135.7 146.1 L143.1 137.9 L154.8 138.7 L164.5 133.2 L172.7 134.8M154.3 43.3 L154.6 34.3 L165.6 31.4 L177.4 30.7 L187.0 36.5M115.1 87.2 L111.6 79.5 L109.5 67.0M84.1 129.4 L78.1 126.8 L73.8 121.6M84.5 56.5 L82.1 47.6 L71.7 42.7 L60.2 49.0 L48.7 50.0M151.3 118.5 L146.3 124.6 L146.5 135.0M143.3 138.5 L144.1 127.7 L141.5 119.5 L148.9 109.2M124.5 79.1 L129.0 69.0 L130.3 62.7M65.8 115.6 L57.5 118.8 L49.5 112.1 L40.9 110.5 L34.0 99.9M110.4 129.0 L101.6 122.0 L93.1 121.1 L80.6 115.2 L75.5 118.9M184.3 136.0 L180.2 131.6 L170.8 134.4M191.7 35.3 L184.4 44.3 L181.6 55.3 L174.9 58.3 L175.0 67.7 L185.6 71.6M123.4 128.4 L127.2 123.3 L126.7 112.2 L119.5 105.0 L110.5 107.5M179.7 77.4 L188.5 74.6 L196.7 69.2 L197.5 59.8 L192.2 55.2 L185.5 53.4M141.2 61.6 L134.9 67.9 L136.3 74.4 L129.9 86.3 L123.6 85.5 L117.5 86.0M171.9 127.7 L172.4 135.0 L166.3 141.0 L159.0 141.3 L150.1 148.1M168.3 79.0 L158.4 75.4 L151.2 67.2 L156.2 56.5 L149.4 48.0 L151.7 34.4M102.3 75.3 L96.5 76.8 L89.5 75.2 L82.6 77.2" stroke="#a2b4b0" stroke-width="0.95" fill="none" stroke-linejoin="round" stroke-linecap="round"/>
<path d="M233.0 69.5 L231.6 79.7 L224.5 82.3 L220.4 87.4 L212.9 88.8 L208.1 85.0M154.7 37.8 L144.3 40.3 L138.3 32.0 L139.3 24.5 L137.3 17.3M203.7 25.4 L190.3 26.3 L184.5 22.7 L184.8 15.5 L179.5 6.8 L173.8 1.7M230.0 39.6 L231.5 31.5 L221.0 25.4 L214.7 25.2M126.2 12.7 L138.6 9.0 L150.1 14.5M233.7 60.4 L224.0 56.4 L216.5 64.9M155.9 31.4 L167.0 39.2 L173.6 47.2 L179.8 45.7M216.9 49.7 L209.9 44.8 L200.6 51.4 L191.3 49.3 L183.4 53.5 L173.7 55.1M121.1 16.7 L118.8 23.9 L119.5 36.5M107.1 43.3 L95.0 37.4 L95.2 26.4 L103.4 23.9M131.3 8.1 L133.3 15.2 L129.7 21.4 L129.4 30.7 L131.4 41.1M141.0 56.3 L134.1 63.4 L137.2 69.0M233.7 46.8 L232.7 58.8 L227.1 64.6 L230.1 70.7 L228.6 77.9 L222.7 87.3M163.5 35.5 L156.2 47.0 L148.4 52.3 L137.9 53.9 L135.0 63.7 L139.9 69.5M198.8 44.0 L205.1 53.7 L198.1 65.0 L186.7 70.6 L177.5 72.0M213.3 9.3 L199.7 6.3 L190.9 7.7 L181.0 16.9M245.2 5.0 L232.4 3.0 L226.0 5.4 L220.1 3.4M219.7 9.4 L225.5 13.8 L231.0 25.2M184.4 36.6 L193.2 28.9 L196.7 19.8M185.8 53.3 L182.8 63.2 L188.2 67.9M183.8 52.3 L179.3 62.1 L182.2 75.3M215.4 23.7 L206.2 28.8 L195.6 21.6 L188.4 21.4 L180.3 16.8M193.1 25.5 L186.6 17.8 L178.0 14.0M156.5 69.8 L146.9 75.4 L138.4 68.5M192.4 56.4 L197.6 59.7 L204.0 54.4M142.3 45.3 L152.6 45.8 L160.7 39.7 L169.7 45.4 L173.1 51.2M179.7 58.8 L174.5 48.3 L180.1 42.0 L188.5 40.9M132.5 15.5 L124.1 13.0 L115.8 15.2 L102.3 11.8 L96.9 8.8 L88.7 11.9M196.9 36.2 L193.6 22.7 L184.7 15.6 L174.2 18.6 L167.3 11.1M209.5 52.0 L220.0 47.0 L223.1 40.9 L233.8 40.3 L245.5 47.9 L257.7 46.9M230.3 42.5 L221.7 44.6 L212.1 40.6 L210.4 34.8 L213.3 26.9 L222.7 25.6M153.4 16.2 L164.2 17.8 L167.6 11.0 L181.2 11.9 L191.5 10.0M172.1 64.4 L178.3 58.1 L184.3 57.5 L188.7 52.3 L199.8 50.9 L203.6 37.7M170.4 30.8 L162.6 27.5 L154.9 34.1 L155.5 42.5 L143.5 49.5M232.7 29.5 L240.0 31.2 L250.5 30.7M237.1 27.8 L246.9 29.8 L249.7 42.7M174.7 10.1 L182.5 19.3 L187.8 23.3M241.9 34.3 L236.9 44.7 L231.2 50.1 L223.6 53.1 L222.9 66.6 L227.8 74.9M154.8 3.8 L162.0 0.5M227.5 22.0 L235.5 22.2 L237.2 28.5 L230.6 36.9 L218.4 41.4 L205.5 43.1M108.6 11.9 L99.7 13.0 L92.6 7.4M157.5 4.6 L167.1 6.0 L172.3 9.6 L179.5 9.9 L187.4 7.7M224.4 8.9 L220.0 15.3 L207.1 19.9 L200.8 27.4M126.7 60.1 L130.0 51.8 L127.3 42.0 L120.4 41.0 L113.9 46.0M214.6 26.9 L210.5 16.0 L202.7 14.8 L197.8 19.6M182.1 25.3 L173.9 27.6 L165.1 36.5 L156.2 39.0 L146.9 29.8M228.5 9.3 L218.3 14.2 L213.7 10.1M204.1 32.4 L206.6 38.7 L207.2 52.0 L212.6 55.2 L221.6 52.2 L233.5 52.7M180.6 44.1 L187.1 48.7 L187.3 59.3 L191.3 70.8M196.6 63.1 L195.6 56.9 L199.1 44.0M211.2 6.0 L206.1 1.6M173.0 48.2 L170.1 41.1 L163.3 37.9 L158.4 32.4 L150.4 32.1 L142.2 35.1" stroke="#364240" stroke-width="2.1" fill="none" stroke-linejoin="round" stroke-linecap="round"/>
<path d="M233.0 69.5 L231.6 79.7 L224.5 82.3 L220.4 87.4 L212.9 88.8 L208.1 85.0M154.7 37.8 L144.3 40.3 L138.3 32.0 L139.3 24.5 L137.3 17.3M203.7 25.4 L190.3 26.3 L184.5 22.7 L184.8 15.5 L179.5 6.8 L173.8 1.7M230.0 39.6 L231.5 31.5 L221.0 25.4 L214.7 25.2M126.2 12.7 L138.6 9.0 L150.1 14.5M233.7 60.4 L224.0 56.4 L216.5 64.9M155.9 31.4 L167.0 39.2 L173.6 47.2 L179.8 45.7M216.9 49.7 L209.9 44.8 L200.6 51.4 L191.3 49.3 L183.4 53.5 L173.7 55.1M121.1 16.7 L118.8 23.9 L119.5 36.5M107.1 43.3 L95.0 37.4 L95.2 26.4 L103.4 23.9M131.3 8.1 L133.3 15.2 L129.7 21.4 L129.4 30.7 L131.4 41.1M141.0 56.3 L134.1 63.4 L137.2 69.0M233.7 46.8 L232.7 58.8 L227.1 64.6 L230.1 70.7 L228.6 77.9 L222.7 87.3M163.5 35.5 L156.2 47.0 L148.4 52.3 L137.9 53.9 L135.0 63.7 L139.9 69.5M198.8 44.0 L205.1 53.7 L198.1 65.0 L186.7 70.6 L177.5 72.0M213.3 9.3 L199.7 6.3 L190.9 7.7 L181.0 16.9M245.2 5.0 L232.4 3.0 L226.0 5.4 L220.1 3.4M219.7 9.4 L225.5 13.8 L231.0 25.2M184.4 36.6 L193.2 28.9 L196.7 19.8M185.8 53.3 L182.8 63.2 L188.2 67.9M183.8 52.3 L179.3 62.1 L182.2 75.3M215.4 23.7 L206.2 28.8 L195.6 21.6 L188.4 21.4 L180.3 16.8M193.1 25.5 L186.6 17.8 L178.0 14.0M156.5 69.8 L146.9 75.4 L138.4 68.5M192.4 56.4 L197.6 59.7 L204.0 54.4M142.3 45.3 L152.6 45.8 L160.7 39.7 L169.7 45.4 L173.1 51.2M179.7 58.8 L174.5 48.3 L180.1 42.0 L188.5 40.9M132.5 15.5 L124.1 13.0 L115.8 15.2 L102.3 11.8 L96.9 8.8 L88.7 11.9M196.9 36.2 L193.6 22.7 L184.7 15.6 L174.2 18.6 L167.3 11.1M209.5 52.0 L220.0 47.0 L223.1 40.9 L233.8 40.3 L245.5 47.9 L257.7 46.9M230.3 42.5 L221.7 44.6 L212.1 40.6 L210.4 34.8 L213.3 26.9 L222.7 25.6M153.4 16.2 L164.2 17.8 L167.6 11.0 L181.2 11.9 L191.5 10.0M172.1 64.4 L178.3 58.1 L184.3 57.5 L188.7 52.3 L199.8 50.9 L203.6 37.7M170.4 30.8 L162.6 27.5 L154.9 34.1 L155.5 42.5 L143.5 49.5M232.7 29.5 L240.0 31.2 L250.5 30.7M237.1 27.8 L246.9 29.8 L249.7 42.7M174.7 10.1 L182.5 19.3 L187.8 23.3M241.9 34.3 L236.9 44.7 L231.2 50.1 L223.6 53.1 L222.9 66.6 L227.8 74.9M154.8 3.8 L162.0 0.5M227.5 22.0 L235.5 22.2 L237.2 28.5 L230.6 36.9 L218.4 41.4 L205.5 43.1M108.6 11.9 L99.7 13.0 L92.6 7.4M157.5 4.6 L167.1 6.0 L172.3 9.6 L179.5 9.9 L187.4 7.7M224.4 8.9 L220.0 15.3 L207.1 19.9 L200.8 27.4M126.7 60.1 L130.0 51.8 L127.3 42.0 L120.4 41.0 L113.9 46.0M214.6 26.9 L210.5 16.0 L202.7 14.8 L197.8 19.6M182.1 25.3 L173.9 27.6 L165.1 36.5 L156.2 39.0 L146.9 29.8M228.5 9.3 L218.3 14.2 L213.7 10.1M204.1 32.4 L206.6 38.7 L207.2 52.0 L212.6 55.2 L221.6 52.2 L233.5 52.7M180.6 44.1 L187.1 48.7 L187.3 59.3 L191.3 70.8M196.6 63.1 L195.6 56.9 L199.1 44.0M211.2 6.0 L206.1 1.6M173.0 48.2 L170.1 41.1 L163.3 37.9 L158.4 32.4 L150.4 32.1 L142.2 35.1" stroke="#a2b4b0" stroke-width="0.95" fill="none" stroke-linejoin="round" stroke-linecap="round"/>
<path d="M157.6 80.4 L156.2 86.4 L156.0 94.9 L162.3 97.3 L168.8 102.8M198.2 45.9 L199.8 40.3 L195.8 34.2M212.8 97.3 L218.8 98.1 L222.0 92.4 L218.7 85.9M159.3 53.2 L154.0 52.2 L145.4 57.2 L137.1 59.2M230.4 74.0 L231.7 82.9 L231.1 92.4 L223.3 98.1M203.5 46.9 L205.3 53.6 L209.4 57.8M202.3 98.6 L202.8 89.4 L207.8 83.0M179.2 45.0 L180.5 50.1 L172.6 55.8 L164.0 55.4M231.6 77.4 L225.0 74.5 L221.1 71.1M186.0 41.6 L177.1 39.1 L172.8 35.9M154.5 86.8 L163.2 82.3 L162.6 76.6M174.3 63.6 L166.9 66.0 L159.7 63.3 L153.8 71.1M200.8 95.6 L202.9 101.7 L197.0 106.2 L194.4 112.4M210.7 85.1 L209.1 94.7 L202.7 99.3 L196.7 100.2 L193.4 104.7M220.7 47.1 L220.7 53.2 L217.2 60.3 L222.2 68.4 L230.6 67.4M215.6 36.7 L209.3 44.2 L209.3 52.6 L215.0 54.4 L216.3 59.9M213.6 30.0 L216.0 37.6 L220.7 40.6 L230.1 39.7M200.9 100.9 L194.7 94.7 L197.3 86.4 L193.2 82.6 L192.8 75.0M179.3 67.5 L178.1 61.0 L174.3 52.2 L169.7 48.5M186.6 97.9 L181.4 99.1 L173.8 97.7M173.8 84.8 L165.3 84.4 L163.9 79.5M178.1 38.1 L170.3 40.3 L163.8 32.9M206.8 64.0 L211.9 69.7 L208.4 76.9 L208.2 86.0 L204.1 92.1M226.9 52.3 L221.7 55.8 L220.9 64.4 L223.4 70.2M191.0 47.8 L187.6 51.7 L191.5 59.7 L197.0 62.9 L204.8 57.2M205.9 51.4 L212.0 46.0 L219.8 49.6 L224.9 53.9 L222.2 62.4M191.3 102.8 L191.4 97.8 L195.7 92.3 L203.3 94.8M161.8 87.6 L160.1 93.3 L163.5 98.9 L158.9 103.9 L149.4 102.4M218.8 52.8 L226.9 53.3 L230.6 48.5 L239.9 46.5M173.2 68.7 L179.6 63.9 L185.2 56.7M197.2 87.6 L203.4 80.2 L204.7 71.0 L199.8 65.9M205.7 54.4 L213.7 54.9 L215.2 61.7 L211.1 64.8M176.0 81.9 L172.4 85.6 L168.9 93.6 L170.1 100.3M178.2 84.2 L185.7 81.1 L192.8 86.5M175.4 92.2 L182.2 95.6 L185.7 99.2 L189.8 107.3M230.1 38.1 L222.7 41.4 L216.9 46.2 L213.8 53.6M210.5 103.5 L212.0 95.1 L219.4 94.3M202.2 54.9 L199.9 45.7 L195.2 43.7 L193.8 37.1M168.7 57.7 L172.2 54.0 L178.6 51.7 L184.9 56.8M174.5 111.5 L182.3 117.2 L180.5 122.7 L175.6 127.2 L169.9 124.7M176.2 78.1 L177.0 72.1 L180.3 63.9M186.0 62.8 L191.6 61.6 L197.2 58.2 L202.8 56.8M206.0 32.9 L196.2 31.3 L191.6 35.0 L187.0 41.0 L188.6 49.4M209.7 29.2 L213.8 23.0 L212.7 18.0M168.4 72.0 L159.2 71.5 L153.9 74.6 L153.7 81.0 L154.8 87.2M229.2 42.1 L233.9 46.8 L241.5 45.9 L248.2 53.2 L248.8 59.8M184.4 109.6 L175.5 106.2 L168.1 106.8 L162.5 100.2M231.3 96.8 L226.1 97.7 L221.0 92.6M204.8 64.6 L202.3 57.1 L203.4 49.0 L206.9 45.0M230.0 48.2 L222.4 47.3 L218.4 55.2 L211.1 54.5M209.2 70.4 L201.1 74.0 L194.0 71.3M216.7 45.8 L217.6 55.5 L221.7 60.9 L223.5 66.4 L221.4 72.9M204.4 70.5 L205.5 76.8 L200.3 81.9 L194.6 80.6 L188.9 80.5M190.1 82.4 L191.8 76.4 L192.3 70.1 L188.9 63.2 L189.1 56.9M185.9 70.7 L176.8 74.3 L170.8 71.1M153.6 63.5 L147.1 60.5 L143.5 54.6 L137.6 55.8 L131.6 55.3M220.5 32.0 L211.8 28.2 L204.0 27.6 L200.5 21.3M231.6 40.3 L237.9 46.4 L246.5 44.8 L254.4 50.4M174.1 53.7 L169.2 61.5 L167.8 66.8 L170.6 71.2M205.8 86.9 L202.9 82.0 L207.7 74.0" stroke="#364240" stroke-width="2.1" fill="none" stroke-linejoin="round" stroke-linecap="round"/>
<path d="M157.6 80.4 L156.2 86.4 L156.0 94.9 L162.3 97.3 L168.8 102.8M198.2 45.9 L199.8 40.3 L195.8 34.2M212.8 97.3 L218.8 98.1 L222.0 92.4 L218.7 85.9M159.3 53.2 L154.0 52.2 L145.4 57.2 L137.1 59.2M230.4 74.0 L231.7 82.9 L231.1 92.4 L223.3 98.1M203.5 46.9 L205.3 53.6 L209.4 57.8M202.3 98.6 L202.8 89.4 L207.8 83.0M179.2 45.0 L180.5 50.1 L172.6 55.8 L164.0 55.4M231.6 77.4 L225.0 74.5 L221.1 71.1M186.0 41.6 L177.1 39.1 L172.8 35.9M154.5 86.8 L163.2 82.3 L162.6 76.6M174.3 63.6 L166.9 66.0 L159.7 63.3 L153.8 71.1M200.8 95.6 L202.9 101.7 L197.0 106.2 L194.4 112.4M210.7 85.1 L209.1 94.7 L202.7 99.3 L196.7 100.2 L193.4 104.7M220.7 47.1 L220.7 53.2 L217.2 60.3 L222.2 68.4 L230.6 67.4M215.6 36.7 L209.3 44.2 L209.3 52.6 L215.0 54.4 L216.3 59.9M213.6 30.0 L216.0 37.6 L220.7 40.6 L230.1 39.7M200.9 100.9 L194.7 94.7 L197.3 86.4 L193.2 82.6 L192.8 75.0M179.3 67.5 L178.1 61.0 L174.3 52.2 L169.7 48.5M186.6 97.9 L181.4 99.1 L173.8 97.7M173.8 84.8 L165.3 84.4 L163.9 79.5M178.1 38.1 L170.3 40.3 L163.8 32.9M206.8 64.0 L211.9 69.7 L208.4 76.9 L208.2 86.0 L204.1 92.1M226.9 52.3 L221.7 55.8 L220.9 64.4 L223.4 70.2M191.0 47.8 L187.6 51.7 L191.5 59.7 L197.0 62.9 L204.8 57.2M205.9 51.4 L212.0 46.0 L219.8 49.6 L224.9 53.9 L222.2 62.4M191.3 102.8 L191.4 97.8 L195.7 92.3 L203.3 94.8M161.8 87.6 L160.1 93.3 L163.5 98.9 L158.9 103.9 L149.4 102.4M218.8 52.8 L226.9 53.3 L230.6 48.5 L239.9 46.5M173.2 68.7 L179.6 63.9 L185.2 56.7M197.2 87.6 L203.4 80.2 L204.7 71.0 L199.8 65.9M205.7 54.4 L213.7 54.9 L215.2 61.7 L211.1 64.8M176.0 81.9 L172.4 85.6 L168.9 93.6 L170.1 100.3M178.2 84.2 L185.7 81.1 L192.8 86.5M175.4 92.2 L182.2 95.6 L185.7 99.2 L189.8 107.3M230.1 38.1 L222.7 41.4 L216.9 46.2 L213.8 53.6M210.5 103.5 L212.0 95.1 L219.4 94.3M202.2 54.9 L199.9 45.7 L195.2 43.7 L193.8 37.1M168.7 57.7 L172.2 54.0 L178.6 51.7 L184.9 56.8M174.5 111.5 L182.3 117.2 L180.5 122.7 L175.6 127.2 L169.9 124.7M176.2 78.1 L177.0 72.1 L180.3 63.9M186.0 62.8 L191.6 61.6 L197.2 58.2 L202.8 56.8M206.0 32.9 L196.2 31.3 L191.6 35.0 L187.0 41.0 L188.6 49.4M209.7 29.2 L213.8 23.0 L212.7 18.0M168.4 72.0 L159.2 71.5 L153.9 74.6 L153.7 81.0 L154.8 87.2M229.2 42.1 L233.9 46.8 L241.5 45.9 L248.2 53.2 L248.8 59.8M184.4 109.6 L175.5 106.2 L168.1 106.8 L162.5 100.2M231.3 96.8 L226.1 97.7 L221.0 92.6M204.8 64.6 L202.3 57.1 L203.4 49.0 L206.9 45.0M230.0 48.2 L222.4 47.3 L218.4 55.2 L211.1 54.5M209.2 70.4 L201.1 74.0 L194.0 71.3M216.7 45.8 L217.6 55.5 L221.7 60.9 L223.5 66.4 L221.4 72.9M204.4 70.5 L205.5 76.8 L200.3 81.9 L194.6 80.6 L188.9 80.5M190.1 82.4 L191.8 76.4 L192.3 70.1 L188.9 63.2 L189.1 56.9M185.9 70.7 L176.8 74.3 L170.8 71.1M153.6 63.5 L147.1 60.5 L143.5 54.6 L137.6 55.8 L131.6 55.3M220.5 32.0 L211.8 28.2 L204.0 27.6 L200.5 21.3M231.6 40.3 L237.9 46.4 L246.5 44.8 L254.4 50.4M174.1 53.7 L169.2 61.5 L167.8 66.8 L170.6 71.2M205.8 86.9 L202.9 82.0 L207.7 74.0" stroke="#a2b4b0" stroke-width="0.95" fill="none" stroke-linejoin="round" stroke-linecap="round"/>
<path d="M11.6 16.7 L8.5 24.3 L2.7 31.3M53.1 14.9 L50.2 22.4 L37.4 23.9 L31.0 21.0 L22.6 24.3 L12.7 18.2M11.3 46.5 L13.8 52.0 L23.1 57.0 L28.8 62.2 L32.5 73.4 L28.6 84.5M16.3 10.2 L25.6 19.3 L30.7 31.7M44.9 40.0 L39.8 45.2 L39.8 55.0 L51.6 61.6 L58.9 72.0M56.5 22.1 L47.0 30.5 L34.6 26.5M63.8 35.3 L68.3 23.5 L59.6 16.2 L53.4 15.8 L45.8 12.3M52.4 34.7 L62.0 40.9 L70.3 43.8 L78.0 32.6M42.1 14.5 L40.5 22.6 L31.5 27.7 L25.8 35.6 L27.5 43.8 L36.2 44.7M75.6 32.8 L79.8 39.6 L81.8 51.7 L72.4 58.8 L62.6 62.3M63.0 29.8 L59.4 35.5 L60.6 48.2M6.1 36.4 L0.3 32.9M38.4 7.5 L46.4 9.3 L53.9 6.6M15.8 20.2 L25.7 23.0 L29.5 18.2 L28.7 5.9" stroke="#364240" stroke-width="2.1" fill="none" stroke-linejoin="round" stroke-linecap="round"/>
<path d="M11.6 16.7 L8.5 24.3 L2.7 31.3M53.1 14.9 L50.2 22.4 L37.4 23.9 L31.0 21.0 L22.6 24.3 L12.7 18.2M11.3 46.5 L13.8 52.0 L23.1 57.0 L28.8 62.2 L32.5 73.4 L28.6 84.5M16.3 10.2 L25.6 19.3 L30.7 31.7M44.9 40.0 L39.8 45.2 L39.8 55.0 L51.6 61.6 L58.9 72.0M56.5 22.1 L47.0 30.5 L34.6 26.5M63.8 35.3 L68.3 23.5 L59.6 16.2 L53.4 15.8 L45.8 12.3M52.4 34.7 L62.0 40.9 L70.3 43.8 L78.0 32.6M42.1 14.5 L40.5 22.6 L31.5 27.7 L25.8 35.6 L27.5 43.8 L36.2 44.7M75.6 32.8 L79.8 39.6 L81.8 51.7 L72.4 58.8 L62.6 62.3M63.0 29.8 L59.4 35.5 L60.6 48.2M6.1 36.4 L0.3 32.9M38.4 7.5 L46.4 9.3 L53.9 6.6M15.8 20.2 L25.7 23.0 L29.5 18.2 L28.7 5.9" stroke="#a2b4b0" stroke-width="0.95" fill="none" stroke-linejoin="round" stroke-linecap="round"/>
<path d="M368.4 16.1 L372.8 6.3 L368.7 1.1M344.5 5.4 L340.2 17.1M404.5 26.4 L398.9 36.0 L402.7 41.2M394.7 19.2 L397.2 31.6 L387.2 38.1M403.9 13.9 L405.3 4.3M410.4 18.7 L403.5 11.6 L391.7 17.2 L381.1 14.9 L372.5 9.2 L359.7 9.4M381.7 16.1 L390.5 12.2 L398.8 4.4M351.4 18.3 L363.2 22.7 L368.5 29.4 L381.8 26.1M413.8 28.3 L404.1 33.4 L395.8 33.4 L389.1 24.6 L396.1 14.2M417.2 6.5 L419.6 18.3 L429.4 19.5M376.1 2.6 L372.4 12.2 L363.8 15.8 L362.8 27.1M365.4 2.7 L354.4 9.6M402.6 19.8 L409.8 13.2 L418.0 17.4 L422.1 24.9 L422.1 32.5M420.0 24.8 L425.8 19.0M354.3 4.2 L348.1 1.1M409.1 31.2 L396.9 26.6 L387.9 33.7 L377.4 28.6 L372.4 23.1M410.8 22.0 L406.0 11.3 L396.5 7.7 L389.9 2.0 L384.2 5.2M403.6 37.4 L406.2 24.8 L399.4 13.6 L386.8 13.5M359.0 27.7 L364.8 19.9 L374.5 14.7M375.0 12.0 L387.3 9.8 L393.3 5.5 L399.8 5.8M377.2 22.0 L368.7 31.9" stroke="#364240" stroke-width="2.1" fill="none" stroke-linejoin="round" stroke-linecap="round"/>
<path d="M368.4 16.1 L372.8 6.3 L368.7 1.1M344.5 5.4 L340.2 17.1M404.5 26.4 L398.9 36.0 L402.7 41.2M394.7 19.2 L397.2 31.6 L387.2 38.1M403.9 13.9 L405.3 4.3M410.4 18.7 L403.5 11.6 L391.7 17.2 L381.1 14.9 L372.5 9.2 L359.7 9.4M381.7 16.1 L390.5 12.2 L398.8 4.4M351.4 18.3 L363.2 22.7 L368.5 29.4 L381.8 26.1M413.8 28.3 L404.1 33.4 L395.8 33.4 L389.1 24.6 L396.1 14.2M417.2 6.5 L419.6 18.3 L429.4 19.5M376.1 2.6 L372.4 12.2 L363.8 15.8 L362.8 27.1M365.4 2.7 L354.4 9.6M402.6 19.8 L409.8 13.2 L418.0 17.4 L422.1 24.9 L422.1 32.5M420.0 24.8 L425.8 19.0M354.3 4.2 L348.1 1.1M409.1 31.2 L396.9 26.6 L387.9 33.7 L377.4 28.6 L372.4 23.1M410.8 22.0 L406.0 11.3 L396.5 7.7 L389.9 2.0 L384.2 5.2M403.6 37.4 L406.2 24.8 L399.4 13.6 L386.8 13.5M359.0 27.7 L364.8 19.9 L374.5 14.7M375.0 12.0 L387.3 9.8 L393.3 5.5 L399.8 5.8M377.2 22.0 L368.7 31.9" stroke="#a2b4b0" stroke-width="0.95" fill="none" stroke-linejoin="round" stroke-linecap="round"/>
<path d="M129.1 300.9 L140.4 305.8 L146.5 301.2M128.4 409.0 L128.3 416.6 L138.2 421.7M127.1 366.4 L127.8 357.9 L118.5 351.1 L121.7 339.0M77.4 304.5 L75.9 314.2 L86.6 320.3 L84.6 334.0M144.5 365.0 L150.7 374.4 L164.2 374.5 L170.0 384.8 L182.7 384.4 L189.1 381.8M123.7 365.4 L126.3 372.6 L135.0 373.4M95.1 355.6 L90.6 343.1 L95.6 338.5 L91.7 329.8M97.2 420.7 L86.2 416.8 L77.8 409.4 L68.3 411.9 L62.6 408.0 L61.9 401.6M6.5 303.3 L12.5 296.3 L10.4 290.3M94.6 372.1 L91.5 381.4 L100.1 391.2M16.4 310.3 L5.0 317.8 L0.1 314.3M85.4 378.0 L75.1 381.6 L69.3 379.8M126.6 293.4 L128.5 282.4 L118.8 272.4 L110.0 272.5 L102.4 274.8 L95.7 279.4M52.6 332.0 L46.2 333.6 L41.7 344.9 L45.4 353.8 L37.7 361.0M35.8 397.7 L25.3 392.5 L19.0 395.7M154.9 403.8 L159.7 409.0 L157.4 414.7 L151.3 422.1 L138.7 420.1M169.0 396.9 L172.0 402.3 L180.5 404.7 L191.4 410.2M40.6 338.7 L53.0 341.9 L56.6 350.1 L63.9 349.3M90.3 382.3 L84.2 387.1 L85.0 396.5 L92.3 398.0 L95.8 404.4 L91.8 411.3M43.7 293.9 L49.2 284.1 L44.9 274.2 L45.7 267.8M11.4 292.1 L14.6 302.8 L7.0 308.6 L3.1 316.9M118.5 314.6 L129.5 320.8 L141.7 319.3M18.1 319.7 L5.4 320.3 L3.0 327.2M24.4 303.8 L31.7 311.4 L38.9 315.7 L38.1 322.7 L30.5 331.7 L29.3 343.5M63.0 313.6 L55.1 309.2 L47.6 308.7 L40.3 319.3M40.9 416.8 L43.0 425.6 L41.6 431.6M74.5 306.4 L68.4 314.2 L73.1 322.3 L78.0 326.6 L79.4 334.4 L75.4 339.6M37.8 395.7 L28.4 394.5 L21.5 396.9 L14.8 396.2 L5.5 386.4M54.0 319.2 L43.3 310.3 L39.5 301.0 L28.4 298.0 L21.6 301.9M84.8 375.9 L90.9 363.8 L85.3 356.8 L79.2 357.3M77.9 392.8 L71.3 390.2 L62.9 391.7M33.9 299.4 L42.8 295.2 L46.8 285.9 L54.3 284.2M154.0 317.3 L140.9 313.1 L134.6 309.2 L134.0 303.1 L140.5 298.5M142.3 312.0 L153.2 307.8 L160.1 299.9M23.3 364.2 L16.0 363.8 L12.5 356.5M96.9 321.7 L99.9 330.7 L113.1 330.5 L125.0 323.5 L128.8 314.0M144.3 404.6 L142.7 393.4 L154.6 386.6M32.8 300.8 L29.8 287.5 L19.4 278.7 L19.8 272.1 L12.7 265.4 L14.3 259.5M80.8 386.3 L91.1 379.6 L89.3 373.2 L81.2 368.8M22.8 396.1 L10.7 394.7 L6.5 405.0M150.4 377.5 L156.2 368.6 L167.3 363.9 L177.2 363.7 L184.2 353.7 L197.1 349.0M130.4 408.6 L118.1 405.0 L112.9 401.0 L115.9 388.3M100.1 318.2 L111.8 322.1 L119.8 322.4 L127.2 319.1 L132.8 314.9 L130.4 308.1M57.0 364.2 L48.4 363.9 L41.1 367.5 L38.5 378.8 L31.5 389.7 L22.4 393.7M32.0 421.9 L25.1 428.3 L17.5 426.4M135.5 403.9 L144.0 399.4 L150.6 403.8 L159.1 398.9M74.0 291.9 L74.3 282.2 L81.5 275.0 L87.6 276.3M123.1 321.4 L129.3 325.9 L124.7 338.3 L124.8 346.1 L114.3 351.4 L104.3 349.8M52.1 400.0 L53.2 407.8 L66.0 410.4 L73.8 414.0 L75.6 423.6M52.8 300.6 L54.1 292.7 L47.6 281.7 L52.0 273.9 L63.8 273.9 L68.1 279.1M77.5 380.4 L78.5 391.9 L82.3 397.2M127.6 399.4 L124.1 405.2 L120.1 417.9M114.0 365.3 L103.3 363.6 L96.9 359.7 L96.5 350.9 L89.4 343.3M15.6 423.9 L23.0 424.4M34.3 401.8 L25.1 397.8 L15.1 396.0 L10.1 405.7 L1.0 413.4M9.6 290.0 L17.0 293.1 L26.5 283.3 L34.5 280.4 L39.8 287.0M105.0 346.0 L112.8 351.1 L122.5 345.6 L119.7 334.1M128.3 405.4 L122.9 411.9 L123.7 420.6 L131.6 430.5M159.5 395.7 L166.4 388.8 L178.9 392.2M36.4 338.3 L39.7 343.6 L45.3 347.1M11.5 395.2 L9.4 404.8 L1.8 412.8M142.6 394.9 L143.4 404.2 L147.9 412.0M61.8 426.1 L52.6 420.9 L44.2 425.1M15.7 364.4 L15.7 352.4 L10.1 340.6 L9.3 329.5 L2.0 327.4M51.3 336.7 L57.7 329.0 L56.1 320.1 L48.8 309.0M93.7 397.9 L90.3 391.0 L77.5 392.2 L68.7 402.4 L64.8 412.7M136.6 350.2 L133.1 343.3 L130.5 331.4 L136.6 327.3 L138.1 319.6M139.7 323.0 L151.4 323.8 L163.0 318.6 L165.4 313.1M147.8 413.3 L150.5 406.5 L143.6 401.2 L137.3 405.9 L127.8 406.5 L120.5 404.0M14.4 317.4 L17.5 329.8 L13.8 337.1 L16.2 346.8 L21.9 353.6M65.2 299.9 L69.2 310.7 L64.0 319.0 L60.3 330.6 L51.6 337.5 L42.4 331.5M26.6 382.6 L17.6 375.6 L19.3 365.1M115.1 338.3 L119.8 332.9 L117.7 320.6 L122.5 313.2 L122.5 302.9 L130.1 296.8M56.5 345.0 L47.5 344.3 L43.2 334.1 L36.4 328.8 L30.6 318.8M3.7 317.4 L11.3 316.1 L22.6 319.9 L28.9 311.6M124.2 350.0 L118.5 352.8 L114.3 357.4 L103.4 355.9M19.1 313.0 L31.0 320.1 L35.2 328.4 L35.4 342.2 L40.5 354.3M134.9 378.9 L124.6 379.8 L115.3 389.0 L105.3 387.6 L98.2 398.8 L100.2 410.1M26.6 381.8 L17.6 374.8 L18.5 365.6M163.2 425.7 L168.8 430.7 L180.4 426.7 L179.8 415.2M54.1 397.6 L61.2 405.1 L55.9 418.0 L43.9 417.5 L38.5 421.4M70.4 331.8 L65.5 336.8 L58.9 338.8M148.1 352.7 L137.9 348.2 L125.4 345.9 L116.3 339.4 L117.1 331.8M86.3 361.1 L82.3 353.6 L86.7 349.0 L84.0 341.1 L73.8 333.3M145.8 326.9 L139.4 325.1 L128.8 326.9 L125.4 335.0 L133.8 342.3 L146.2 339.9M44.2 313.3 L50.9 317.4 L49.4 325.1 L37.3 326.4M107.2 365.7 L111.8 353.2 L123.3 350.0 L127.0 340.9 L121.6 336.0 L112.4 336.6M28.5 309.5 L23.0 305.5 L24.1 294.8 L21.0 288.8 L30.7 278.9 L31.0 270.7M56.1 372.0 L56.3 379.0 L50.7 386.0M132.3 423.2 L120.5 417.8 L109.8 419.6 L98.9 415.5 L91.6 417.8 L84.1 424.6M20.1 408.8 L9.0 411.4M14.9 329.8 L26.5 329.0 L33.8 326.8M30.5 408.2 L31.5 420.1 L24.7 426.0M101.4 389.1 L96.1 400.9 L106.3 410.4 L105.6 421.6 L110.2 429.2M22.7 420.5 L20.0 427.2M97.7 369.6 L93.9 375.6 L92.6 388.1M41.1 303.1 L30.0 298.1 L20.8 308.6 L20.5 318.6 L26.0 323.6 L37.9 326.6M128.3 338.1 L141.3 334.5 L143.8 327.6 L154.2 319.4 L163.3 325.0" stroke="#364240" stroke-width="2.1" fill="none" stroke-linejoin="round" stroke-linecap="round"/>
<path d="M129.1 300.9 L140.4 305.8 L146.5 301.2M128.4 409.0 L128.3 416.6 L138.2 421.7M127.1 366.4 L127.8 357.9 L118.5 351.1 L121.7 339.0M77.4 304.5 L75.9 314.2 L86.6 320.3 L84.6 334.0M144.5 365.0 L150.7 374.4 L164.2 374.5 L170.0 384.8 L182.7 384.4 L189.1 381.8M123.7 365.4 L126.3 372.6 L135.0 373.4M95.1 355.6 L90.6 343.1 L95.6 338.5 L91.7 329.8M97.2 420.7 L86.2 416.8 L77.8 409.4 L68.3 411.9 L62.6 408.0 L61.9 401.6M6.5 303.3 L12.5 296.3 L10.4 290.3M94.6 372.1 L91.5 381.4 L100.1 391.2M16.4 310.3 L5.0 317.8 L0.1 314.3M85.4 378.0 L75.1 381.6 L69.3 379.8M126.6 293.4 L128.5 282.4 L118.8 272.4 L110.0 272.5 L102.4 274.8 L95.7 279.4M52.6 332.0 L46.2 333.6 L41.7 344.9 L45.4 353.8 L37.7 361.0M35.8 397.7 L25.3 392.5 L19.0 395.7M154.9 403.8 L159.7 409.0 L157.4 414.7 L151.3 422.1 L138.7 420.1M169.0 396.9 L172.0 402.3 L180.5 404.7 L191.4 410.2M40.6 338.7 L53.0 341.9 L56.6 350.1 L63.9 349.3M90.3 382.3 L84.2 387.1 L85.0 396.5 L92.3 398.0 L95.8 404.4 L91.8 411.3M43.7 293.9 L49.2 284.1 L44.9 274.2 L45.7 267.8M11.4 292.1 L14.6 302.8 L7.0 308.6 L3.1 316.9M118.5 314.6 L129.5 320.8 L141.7 319.3M18.1 319.7 L5.4 320.3 L3.0 327.2M24.4 303.8 L31.7 311.4 L38.9 315.7 L38.1 322.7 L30.5 331.7 L29.3 343.5M63.0 313.6 L55.1 309.2 L47.6 308.7 L40.3 319.3M40.9 416.8 L43.0 425.6 L41.6 431.6M74.5 306.4 L68.4 314.2 L73.1 322.3 L78.0 326.6 L79.4 334.4 L75.4 339.6M37.8 395.7 L28.4 394.5 L21.5 396.9 L14.8 396.2 L5.5 386.4M54.0 319.2 L43.3 310.3 L39.5 301.0 L28.4 298.0 L21.6 301.9M84.8 375.9 L90.9 363.8 L85.3 356.8 L79.2 357.3M77.9 392.8 L71.3 390.2 L62.9 391.7M33.9 299.4 L42.8 295.2 L46.8 285.9 L54.3 284.2M154.0 317.3 L140.9 313.1 L134.6 309.2 L134.0 303.1 L140.5 298.5M142.3 312.0 L153.2 307.8 L160.1 299.9M23.3 364.2 L16.0 363.8 L12.5 356.5M96.9 321.7 L99.9 330.7 L113.1 330.5 L125.0 323.5 L128.8 314.0M144.3 404.6 L142.7 393.4 L154.6 386.6M32.8 300.8 L29.8 287.5 L19.4 278.7 L19.8 272.1 L12.7 265.4 L14.3 259.5M80.8 386.3 L91.1 379.6 L89.3 373.2 L81.2 368.8M22.8 396.1 L10.7 394.7 L6.5 405.0M150.4 377.5 L156.2 368.6 L167.3 363.9 L177.2 363.7 L184.2 353.7 L197.1 349.0M130.4 408.6 L118.1 405.0 L112.9 401.0 L115.9 388.3M100.1 318.2 L111.8 322.1 L119.8 322.4 L127.2 319.1 L132.8 314.9 L130.4 308.1M57.0 364.2 L48.4 363.9 L41.1 367.5 L38.5 378.8 L31.5 389.7 L22.4 393.7M32.0 421.9 L25.1 428.3 L17.5 426.4M135.5 403.9 L144.0 399.4 L150.6 403.8 L159.1 398.9M74.0 291.9 L74.3 282.2 L81.5 275.0 L87.6 276.3M123.1 321.4 L129.3 325.9 L124.7 338.3 L124.8 346.1 L114.3 351.4 L104.3 349.8M52.1 400.0 L53.2 407.8 L66.0 410.4 L73.8 414.0 L75.6 423.6M52.8 300.6 L54.1 292.7 L47.6 281.7 L52.0 273.9 L63.8 273.9 L68.1 279.1M77.5 380.4 L78.5 391.9 L82.3 397.2M127.6 399.4 L124.1 405.2 L120.1 417.9M114.0 365.3 L103.3 363.6 L96.9 359.7 L96.5 350.9 L89.4 343.3M15.6 423.9 L23.0 424.4M34.3 401.8 L25.1 397.8 L15.1 396.0 L10.1 405.7 L1.0 413.4M9.6 290.0 L17.0 293.1 L26.5 283.3 L34.5 280.4 L39.8 287.0M105.0 346.0 L112.8 351.1 L122.5 345.6 L119.7 334.1M128.3 405.4 L122.9 411.9 L123.7 420.6 L131.6 430.5M159.5 395.7 L166.4 388.8 L178.9 392.2M36.4 338.3 L39.7 343.6 L45.3 347.1M11.5 395.2 L9.4 404.8 L1.8 412.8M142.6 394.9 L143.4 404.2 L147.9 412.0M61.8 426.1 L52.6 420.9 L44.2 425.1M15.7 364.4 L15.7 352.4 L10.1 340.6 L9.3 329.5 L2.0 327.4M51.3 336.7 L57.7 329.0 L56.1 320.1 L48.8 309.0M93.7 397.9 L90.3 391.0 L77.5 392.2 L68.7 402.4 L64.8 412.7M136.6 350.2 L133.1 343.3 L130.5 331.4 L136.6 327.3 L138.1 319.6M139.7 323.0 L151.4 323.8 L163.0 318.6 L165.4 313.1M147.8 413.3 L150.5 406.5 L143.6 401.2 L137.3 405.9 L127.8 406.5 L120.5 404.0M14.4 317.4 L17.5 329.8 L13.8 337.1 L16.2 346.8 L21.9 353.6M65.2 299.9 L69.2 310.7 L64.0 319.0 L60.3 330.6 L51.6 337.5 L42.4 331.5M26.6 382.6 L17.6 375.6 L19.3 365.1M115.1 338.3 L119.8 332.9 L117.7 320.6 L122.5 313.2 L122.5 302.9 L130.1 296.8M56.5 345.0 L47.5 344.3 L43.2 334.1 L36.4 328.8 L30.6 318.8M3.7 317.4 L11.3 316.1 L22.6 319.9 L28.9 311.6M124.2 350.0 L118.5 352.8 L114.3 357.4 L103.4 355.9M19.1 313.0 L31.0 320.1 L35.2 328.4 L35.4 342.2 L40.5 354.3M134.9 378.9 L124.6 379.8 L115.3 389.0 L105.3 387.6 L98.2 398.8 L100.2 410.1M26.6 381.8 L17.6 374.8 L18.5 365.6M163.2 425.7 L168.8 430.7 L180.4 426.7 L179.8 415.2M54.1 397.6 L61.2 405.1 L55.9 418.0 L43.9 417.5 L38.5 421.4M70.4 331.8 L65.5 336.8 L58.9 338.8M148.1 352.7 L137.9 348.2 L125.4 345.9 L116.3 339.4 L117.1 331.8M86.3 361.1 L82.3 353.6 L86.7 349.0 L84.0 341.1 L73.8 333.3M145.8 326.9 L139.4 325.1 L128.8 326.9 L125.4 335.0 L133.8 342.3 L146.2 339.9M44.2 313.3 L50.9 317.4 L49.4 325.1 L37.3 326.4M107.2 365.7 L111.8 353.2 L123.3 350.0 L127.0 340.9 L121.6 336.0 L112.4 336.6M28.5 309.5 L23.0 305.5 L24.1 294.8 L21.0 288.8 L30.7 278.9 L31.0 270.7M56.1 372.0 L56.3 379.0 L50.7 386.0M132.3 423.2 L120.5 417.8 L109.8 419.6 L98.9 415.5 L91.6 417.8 L84.1 424.6M20.1 408.8 L9.0 411.4M14.9 329.8 L26.5 329.0 L33.8 326.8M30.5 408.2 L31.5 420.1 L24.7 426.0M101.4 389.1 L96.1 400.9 L106.3 410.4 L105.6 421.6 L110.2 429.2M22.7 420.5 L20.0 427.2M97.7 369.6 L93.9 375.6 L92.6 388.1M41.1 303.1 L30.0 298.1 L20.8 308.6 L20.5 318.6 L26.0 323.6 L37.9 326.6M128.3 338.1 L141.3 334.5 L143.8 327.6 L154.2 319.4 L163.3 325.0" stroke="#a2b4b0" stroke-width="0.95" fill="none" stroke-linejoin="round" stroke-linecap="round"/>
<path d="M144.6 399.5 L141.0 394.3 L131.5 387.1 L124.2 387.9M173.8 371.7 L167.9 372.7 L164.9 378.8M129.4 376.8 L122.0 385.4 L113.6 389.1 L107.0 390.0 L98.7 401.3M216.4 355.0 L206.1 350.3M70.8 379.5 L76.3 371.7 L72.6 361.7 L60.5 359.9M72.7 390.1 L67.0 400.1 L55.4 405.1 L56.4 414.5M60.6 354.6 L53.5 350.7 L44.6 349.2 L38.2 349.4M120.1 393.7 L123.7 404.3 L129.5 409.2 L134.0 416.8 L145.1 418.6M81.9 351.1 L79.1 358.8 L69.1 360.5 L63.7 372.3M152.2 377.2 L142.3 383.6 L142.3 396.5M180.6 372.8 L192.3 365.3 L203.0 369.2 L205.0 377.2 L211.9 383.4M134.4 380.4 L137.3 371.1 L133.6 363.0 L137.9 358.3 L132.6 346.7M207.5 372.0 L209.0 379.3 L213.5 383.9 L226.0 386.7 L232.8 383.5M191.4 368.7 L192.2 382.7 L183.6 385.8 L180.1 390.8 L173.2 395.8M81.5 351.8 L72.4 346.5 L64.8 346.5 L55.2 351.2M157.7 366.1 L163.7 362.6 L168.5 349.5 L172.8 342.9 L180.4 345.1M205.6 362.2 L195.5 364.5 L183.7 361.2 L180.4 356.1 L181.7 345.4 L171.5 337.8M153.2 369.4 L164.9 366.7 L174.3 357.7M177.8 353.4 L186.4 349.8 L197.9 351.3 L199.1 358.6M146.8 374.7 L150.3 382.8 L145.6 392.2 L140.1 396.0M222.4 368.5 L235.0 370.5 L240.3 373.6 L243.7 378.6 L253.2 379.1M129.0 361.6 L122.2 355.8 L115.3 352.2 L113.6 341.0 L121.2 331.1 L123.9 324.3M91.7 390.6 L82.8 385.4 L82.6 378.5 L88.1 368.5M152.9 380.8 L160.8 377.8 L162.4 369.0 L168.5 364.9M70.1 396.8 L82.9 396.9 L88.0 384.4M64.0 380.9 L56.1 391.1 L54.8 402.1M162.6 356.6 L163.4 363.5 L173.4 368.8M111.1 386.7 L113.3 400.3 L124.5 404.1 L137.8 401.1M172.4 374.2 L172.7 364.5 L185.0 358.9 L192.1 349.3M201.3 362.4 L195.8 357.0 L195.1 348.2M186.7 393.8 L185.6 405.6 L180.2 416.5 L170.5 415.5M146.2 389.3 L139.8 400.9 L130.5 406.9 L119.7 407.5M203.1 365.8 L210.1 364.8M174.3 354.8 L184.3 360.2 L188.5 365.6 L192.1 378.2 L189.9 391.0 L185.7 396.3M182.7 392.0 L179.3 401.3 L177.5 414.6 L184.4 425.8M169.8 355.1 L170.3 362.5 L165.3 370.9 L170.2 376.3 L173.9 386.0M184.6 355.1 L185.2 348.4 L192.8 345.5M91.0 350.0 L104.0 349.4 L111.5 351.5 L123.5 350.9M136.9 374.5 L144.6 370.9 L157.7 373.7 L165.1 379.4M165.2 390.4 L171.1 379.3 L176.2 375.4 L178.5 365.0 L169.6 360.3 L160.8 358.5" stroke="#364240" stroke-width="2.1" fill="none" stroke-linejoin="round" stroke-linecap="round"/>
<path d="M144.6 399.5 L141.0 394.3 L131.5 387.1 L124.2 387.9M173.8 371.7 L167.9 372.7 L164.9 378.8M129.4 376.8 L122.0 385.4 L113.6 389.1 L107.0 390.0 L98.7 401.3M216.4 355.0 L206.1 350.3M70.8 379.5 L76.3 371.7 L72.6 361.7 L60.5 359.9M72.7 390.1 L67.0 400.1 L55.4 405.1 L56.4 414.5M60.6 354.6 L53.5 350.7 L44.6 349.2 L38.2 349.4M120.1 393.7 L123.7 404.3 L129.5 409.2 L134.0 416.8 L145.1 418.6M81.9 351.1 L79.1 358.8 L69.1 360.5 L63.7 372.3M152.2 377.2 L142.3 383.6 L142.3 396.5M180.6 372.8 L192.3 365.3 L203.0 369.2 L205.0 377.2 L211.9 383.4M134.4 380.4 L137.3 371.1 L133.6 363.0 L137.9 358.3 L132.6 346.7M207.5 372.0 L209.0 379.3 L213.5 383.9 L226.0 386.7 L232.8 383.5M191.4 368.7 L192.2 382.7 L183.6 385.8 L180.1 390.8 L173.2 395.8M81.5 351.8 L72.4 346.5 L64.8 346.5 L55.2 351.2M157.7 366.1 L163.7 362.6 L168.5 349.5 L172.8 342.9 L180.4 345.1M205.6 362.2 L195.5 364.5 L183.7 361.2 L180.4 356.1 L181.7 345.4 L171.5 337.8M153.2 369.4 L164.9 366.7 L174.3 357.7M177.8 353.4 L186.4 349.8 L197.9 351.3 L199.1 358.6M146.8 374.7 L150.3 382.8 L145.6 392.2 L140.1 396.0M222.4 368.5 L235.0 370.5 L240.3 373.6 L243.7 378.6 L253.2 379.1M129.0 361.6 L122.2 355.8 L115.3 352.2 L113.6 341.0 L121.2 331.1 L123.9 324.3M91.7 390.6 L82.8 385.4 L82.6 378.5 L88.1 368.5M152.9 380.8 L160.8 377.8 L162.4 369.0 L168.5 364.9M70.1 396.8 L82.9 396.9 L88.0 384.4M64.0 380.9 L56.1 391.1 L54.8 402.1M162.6 356.6 L163.4 363.5 L173.4 368.8M111.1 386.7 L113.3 400.3 L124.5 404.1 L137.8 401.1M172.4 374.2 L172.7 364.5 L185.0 358.9 L192.1 349.3M201.3 362.4 L195.8 357.0 L195.1 348.2M186.7 393.8 L185.6 405.6 L180.2 416.5 L170.5 415.5M146.2 389.3 L139.8 400.9 L130.5 406.9 L119.7 407.5M203.1 365.8 L210.1 364.8M174.3 354.8 L184.3 360.2 L188.5 365.6 L192.1 378.2 L189.9 391.0 L185.7 396.3M182.7 392.0 L179.3 401.3 L177.5 414.6 L184.4 425.8M169.8 355.1 L170.3 362.5 L165.3 370.9 L170.2 376.3 L173.9 386.0M184.6 355.1 L185.2 348.4 L192.8 345.5M91.0 350.0 L104.0 349.4 L111.5 351.5 L123.5 350.9M136.9 374.5 L144.6 370.9 L157.7 373.7 L165.1 379.4M165.2 390.4 L171.1 379.3 L176.2 375.4 L178.5 365.0 L169.6 360.3 L160.8 358.5" stroke="#a2b4b0" stroke-width="0.95" fill="none" stroke-linejoin="round" stroke-linecap="round"/>
<path d="M414.8 431.2 L419.7 422.8 L414.1 415.2 L406.4 410.2 L400.6 412.2 L392.5 406.1M321.3 398.4 L328.5 402.8 L340.0 405.5M297.8 429.7 L306.2 422.4 L312.4 425.5 L319.8 437.0 L323.3 450.0M408.1 417.1 L400.5 412.1 L396.4 402.1M417.2 404.6 L407.8 403.2M404.7 409.1 L405.5 399.1M375.0 398.5 L369.8 404.5 L371.1 418.2 L368.3 424.1 L367.4 430.5 L375.1 439.4M328.0 413.9 L336.4 420.5 L337.6 431.5 L341.6 440.8 L341.2 447.7 L333.5 452.3M347.4 428.1 L339.4 429.6 L330.5 434.9 L331.0 445.3M299.5 427.1 L306.1 430.4 L318.4 429.6 L326.3 421.6 L332.8 417.7M426.3 410.1 L415.9 408.3 L404.5 400.9M408.8 404.7 L416.2 401.1 L424.3 403.4 L424.5 416.5M314.5 415.7 L324.7 414.9 L330.7 418.2M310.3 421.8 L307.4 429.4 L293.8 429.3 L288.8 432.8 L282.7 429.8M424.1 410.5 L415.7 417.0 L412.0 424.4M427.7 409.4 L433.8 400.7 L446.2 398.7M310.2 415.4 L313.8 426.5 L306.8 438.0 L298.4 439.7 L293.0 436.3 L292.6 422.9M381.0 419.9 L392.5 423.6 L393.0 435.1 L400.2 438.5 L407.9 438.5 L415.8 442.0M392.8 413.4 L399.4 412.7 L412.3 414.4 L416.5 419.6M321.4 401.0 L332.1 398.2 L342.5 402.3 L353.1 400.3 L361.6 402.4 L374.3 402.6M410.9 426.9 L405.6 417.6 L402.9 408.9M360.0 415.0 L359.9 425.0 L350.4 430.0M304.7 417.6 L303.7 408.3 L308.1 404.2 L315.3 407.6 L319.4 414.9M397.6 418.2 L387.2 416.6 L375.9 423.2 L374.3 432.9M379.3 415.2 L369.7 406.5 L362.1 408.9M419.1 401.9 L428.6 408.8 L429.1 416.0 L434.2 424.7 L429.5 430.1 L420.2 434.9M399.5 429.7 L406.0 432.2 L416.0 429.5 L420.5 424.7 L428.0 420.9M388.9 416.9 L401.6 417.3 L414.0 411.9 L420.0 412.1 L431.4 416.3 L435.4 428.3M429.8 407.8 L438.9 407.2M388.4 420.2 L395.0 421.8 L396.5 433.1 L401.4 437.7 L398.9 444.6M298.6 423.1 L307.9 425.4 L313.5 417.9 L321.1 412.8 L327.1 402.0 L337.3 402.0M388.7 400.6 L377.1 403.1 L371.1 410.5 L376.1 420.4 L375.4 431.4M300.9 400.3 L306.1 406.5 L316.7 411.2 L323.8 408.7 L328.1 400.7M379.7 422.7 L386.6 423.8 L393.0 431.2 L391.2 442.0M327.5 415.3 L322.4 407.1M371.0 428.0 L378.5 430.2 L383.8 439.5 L377.1 451.2 L366.3 453.7 L365.1 464.3M366.2 411.3 L360.8 414.7 L353.4 412.8 L349.1 417.6 L336.3 414.7M322.0 424.1 L316.7 427.9 L316.7 436.9 L312.7 442.8 L304.9 443.2 L296.8 446.1M412.0 410.5 L419.4 407.1 L431.9 406.7 L436.6 419.0 L447.2 422.9M344.6 416.2 L340.1 426.4 L343.6 434.8 L345.4 444.2 L336.3 451.7M331.4 404.4 L323.0 401.9M429.9 409.6 L436.8 400.4 L446.1 398.6M381.4 417.5 L375.9 423.0 L364.8 419.8" stroke="#364240" stroke-width="2.1" fill="none" stroke-linejoin="round" stroke-linecap="round"/>
<path d="M414.8 431.2 L419.7 422.8 L414.1 415.2 L406.4 410.2 L400.6 412.2 L392.5 406.1M321.3 398.4 L328.5 402.8 L340.0 405.5M297.8 429.7 L306.2 422.4 L312.4 425.5 L319.8 437.0 L323.3 450.0M408.1 417.1 L400.5 412.1 L396.4 402.1M417.2 404.6 L407.8 403.2M404.7 409.1 L405.5 399.1M375.0 398.5 L369.8 404.5 L371.1 418.2 L368.3 424.1 L367.4 430.5 L375.1 439.4M328.0 413.9 L336.4 420.5 L337.6 431.5 L341.6 440.8 L341.2 447.7 L333.5 452.3M347.4 428.1 L339.4 429.6 L330.5 434.9 L331.0 445.3M299.5 427.1 L306.1 430.4 L318.4 429.6 L326.3 421.6 L332.8 417.7M426.3 410.1 L415.9 408.3 L404.5 400.9M408.8 404.7 L416.2 401.1 L424.3 403.4 L424.5 416.5M314.5 415.7 L324.7 414.9 L330.7 418.2M310.3 421.8 L307.4 429.4 L293.8 429.3 L288.8 432.8 L282.7 429.8M424.1 410.5 L415.7 417.0 L412.0 424.4M427.7 409.4 L433.8 400.7 L446.2 398.7M310.2 415.4 L313.8 426.5 L306.8 438.0 L298.4 439.7 L293.0 436.3 L292.6 422.9M381.0 419.9 L392.5 423.6 L393.0 435.1 L400.2 438.5 L407.9 438.5 L415.8 442.0M392.8 413.4 L399.4 412.7 L412.3 414.4 L416.5 419.6M321.4 401.0 L332.1 398.2 L342.5 402.3 L353.1 400.3 L361.6 402.4 L374.3 402.6M410.9 426.9 L405.6 417.6 L402.9 408.9M360.0 415.0 L359.9 425.0 L350.4 430.0M304.7 417.6 L303.7 408.3 L308.1 404.2 L315.3 407.6 L319.4 414.9M397.6 418.2 L387.2 416.6 L375.9 423.2 L374.3 432.9M379.3 415.2 L369.7 406.5 L362.1 408.9M419.1 401.9 L428.6 408.8 L429.1 416.0 L434.2 424.7 L429.5 430.1 L420.2 434.9M399.5 429.7 L406.0 432.2 L416.0 429.5 L420.5 424.7 L428.0 420.9M388.9 416.9 L401.6 417.3 L414.0 411.9 L420.0 412.1 L431.4 416.3 L435.4 428.3M429.8 407.8 L438.9 407.2M388.4 420.2 L395.0 421.8 L396.5 433.1 L401.4 437.7 L398.9 444.6M298.6 423.1 L307.9 425.4 L313.5 417.9 L321.1 412.8 L327.1 402.0 L337.3 402.0M388.7 400.6 L377.1 403.1 L371.1 410.5 L376.1 420.4 L375.4 431.4M300.9 400.3 L306.1 406.5 L316.7 411.2 L323.8 408.7 L328.1 400.7M379.7 422.7 L386.6 423.8 L393.0 431.2 L391.2 442.0M327.5 415.3 L322.4 407.1M371.0 428.0 L378.5 430.2 L383.8 439.5 L377.1 451.2 L366.3 453.7 L365.1 464.3M366.2 411.3 L360.8 414.7 L353.4 412.8 L349.1 417.6 L336.3 414.7M322.0 424.1 L316.7 427.9 L316.7 436.9 L312.7 442.8 L304.9 443.2 L296.8 446.1M412.0 410.5 L419.4 407.1 L431.9 406.7 L436.6 419.0 L447.2 422.9M344.6 416.2 L340.1 426.4 L343.6 434.8 L345.4 444.2 L336.3 451.7M331.4 404.4 L323.0 401.9M429.9 409.6 L436.8 400.4 L446.1 398.6M381.4 417.5 L375.9 423.0 L364.8 419.8" stroke="#a2b4b0" stroke-width="0.95" fill="none" stroke-linejoin="round" stroke-linecap="round"/>
<path d="M196.3 420.5 L205.6 423.8 L211.6 419.2 L217.8 419.1 L227.8 425.5 L239.5 427.6M194.3 427.7 L207.8 429.0 L215.2 426.3 L216.3 418.3 L220.9 406.4M197.8 395.5 L201.2 389.4 L210.1 384.7 L220.7 384.6 L227.3 390.6M199.7 400.0 L195.0 387.7 L187.8 380.5M181.8 420.2 L177.1 414.3 L163.6 411.2 L154.8 411.4 L148.8 414.8 L145.1 427.4M255.8 418.4 L248.8 415.0 L243.5 402.7 L248.2 396.6M239.6 395.7 L230.7 400.3 L229.3 409.9 L233.8 415.0 L244.4 421.3 L247.2 427.3M179.4 415.0 L168.8 421.6 L157.9 415.1 L151.4 416.4 L144.5 410.0 L138.7 413.2M233.4 421.9 L231.0 411.4 L232.7 405.4M253.1 405.0 L253.3 416.9 L256.2 422.4 L257.5 431.6" stroke="#364240" stroke-width="2.1" fill="none" stroke-linejoin="round" stroke-linecap="round"/>
<path d="M196.3 420.5 L205.6 423.8 L211.6 419.2 L217.8 419.1 L227.8 425.5 L239.5 427.6M194.3 427.7 L207.8 429.0 L215.2 426.3 L216.3 418.3 L220.9 406.4M197.8 395.5 L201.2 389.4 L210.1 384.7 L220.7 384.6 L227.3 390.6M199.7 400.0 L195.0 387.7 L187.8 380.5M181.8 420.2 L177.1 414.3 L163.6 411.2 L154.8 411.4 L148.8 414.8 L145.1 427.4M255.8 418.4 L248.8 415.0 L243.5 402.7 L248.2 396.6M239.6 395.7 L230.7 400.3 L229.3 409.9 L233.8 415.0 L244.4 421.3 L247.2 427.3M179.4 415.0 L168.8 421.6 L157.9 415.1 L151.4 416.4 L144.5 410.0 L138.7 413.2M233.4 421.9 L231.0 411.4 L232.7 405.4M253.1 405.0 L253.3 416.9 L256.2 422.4 L257.5 431.6" stroke="#a2b4b0" stroke-width="0.95" fill="none" stroke-linejoin="round" stroke-linecap="round"/>
<path d="M158.4 216.3 L155.1 226.4 L157.4 233.1M153.1 230.7 L145.8 219.5 L145.1 211.6 L153.1 207.8 L152.6 197.7 L145.1 195.9M130.5 243.6 L132.1 249.7 L126.2 261.3M150.9 277.3 L147.5 266.4 L152.5 261.0 L160.2 260.9M136.3 225.0 L125.3 222.8 L120.3 214.2 L122.4 207.5 L128.4 205.1M137.2 259.6 L130.3 254.9 L121.7 255.7 L114.5 262.0M147.8 246.8 L160.5 251.4 L161.3 262.7M157.3 292.3 L152.9 303.0 L146.8 306.3 L146.8 319.2M155.7 225.6 L148.4 231.5 L141.2 241.6 L127.8 240.1 L117.3 242.1 L108.3 237.7M151.5 300.0 L144.3 289.0 L132.4 285.2 L124.6 291.7 L121.2 302.0 L123.4 315.3M135.3 258.0 L135.5 250.4 L140.7 245.5 L151.0 242.6 L161.8 247.4 L167.7 254.9M157.2 229.9 L164.5 231.4M141.9 281.0 L154.9 278.2 L161.6 284.3 L159.7 291.0 L147.2 291.0 L136.7 294.9M159.5 280.7 L161.0 288.6" stroke="#364240" stroke-width="2.1" fill="none" stroke-linejoin="round" stroke-linecap="round"/>
<path d="M158.4 216.3 L155.1 226.4 L157.4 233.1M153.1 230.7 L145.8 219.5 L145.1 211.6 L153.1 207.8 L152.6 197.7 L145.1 195.9M130.5 243.6 L132.1 249.7 L126.2 261.3M150.9 277.3 L147.5 266.4 L152.5 261.0 L160.2 260.9M136.3 225.0 L125.3 222.8 L120.3 214.2 L122.4 207.5 L128.4 205.1M137.2 259.6 L130.3 254.9 L121.7 255.7 L114.5 262.0M147.8 246.8 L160.5 251.4 L161.3 262.7M157.3 292.3 L152.9 303.0 L146.8 306.3 L146.8 319.2M155.7 225.6 L148.4 231.5 L141.2 241.6 L127.8 240.1 L117.3 242.1 L108.3 237.7M151.5 300.0 L144.3 289.0 L132.4 285.2 L124.6 291.7 L121.2 302.0 L123.4 315.3M135.3 258.0 L135.5 250.4 L140.7 245.5 L151.0 242.6 L161.8 247.4 L167.7 254.9M157.2 229.9 L164.5 231.4M141.9 281.0 L154.9 278.2 L161.6 284.3 L159.7 291.0 L147.2 291.0 L136.7 294.9M159.5 280.7 L161.0 288.6" stroke="#a2b4b0" stroke-width="0.95" fill="none" stroke-linejoin="round" stroke-linecap="round"/>
<path d="M104.6 433L120 421L136 410.8L158 405.5L180 402.5L205 402.5L227.5 405L261 407.5L281 415L300 424.5L312 433L272 433L254.5 422.6L243.4 416L227.5 414L200 412.5L177.4 413L149 418.7L126.7 433Z" fill="#a6f0d2" stroke="#5c7c74" stroke-width="0.8"/>
<path d="M0 405H18V414H0Z M0 424H18V433H0Z" fill="#a6f0d2"/>
<path d="M47.0 368.0 C44.2 372.0 35.5 383.8 30.0 392.0 C24.5 400.2 18.3 410.7 14.0 417.0 C9.7 423.3 5.7 427.8 4.0 430.0" stroke="#5c6868" stroke-width="6.0" fill="none" stroke-linecap="round" stroke-linejoin="round"/>
<path d="M47.0 368.0 C44.2 372.0 35.5 383.8 30.0 392.0 C24.5 400.2 18.3 410.7 14.0 417.0 C9.7 423.3 5.7 427.8 4.0 430.0" stroke="#98a6a4" stroke-width="5" fill="none" stroke-linecap="round" stroke-linejoin="round"/>
<path d="M16.0 360.0 C16.2 363.3 16.7 372.8 17.0 380.0 C17.3 387.2 17.8 399.2 18.0 403.0" stroke="#5c6868" stroke-width="4.5" fill="none" stroke-linecap="round" stroke-linejoin="round"/>
<path d="M16.0 360.0 C16.2 363.3 16.7 372.8 17.0 380.0 C17.3 387.2 17.8 399.2 18.0 403.0" stroke="#98a6a4" stroke-width="3.5" fill="none" stroke-linecap="round" stroke-linejoin="round"/>
<path d="M88.0 300.0 C85.0 305.8 78.0 322.5 70.0 335.0 C62.0 347.5 50.0 363.3 40.0 375.0 C30.0 386.7 15.0 400.0 10.0 405.0" stroke="#5c6868" stroke-width="4.0" fill="none" stroke-linecap="round" stroke-linejoin="round"/>
<path d="M88.0 300.0 C85.0 305.8 78.0 322.5 70.0 335.0 C62.0 347.5 50.0 363.3 40.0 375.0 C30.0 386.7 15.0 400.0 10.0 405.0" stroke="#98a6a4" stroke-width="3" fill="none" stroke-linecap="round" stroke-linejoin="round"/>
<path d="M313.6 0.0 C308.5 1.2 290.9 3.7 283.0 7.0 C275.1 10.3 271.0 15.0 266.0 20.0 C261.0 25.0 256.8 30.8 253.0 37.0 C249.2 43.2 245.8 51.2 243.0 57.0 C240.2 62.8 239.3 66.9 236.0 72.0 C232.7 77.1 226.1 79.8 223.0 87.5 C219.9 95.2 218.6 105.7 217.7 118.0 C216.8 130.3 219.1 150.8 217.7 161.5 C216.2 172.2 216.1 175.8 209.0 182.0 C201.9 188.2 185.2 194.5 175.0 199.0 C164.8 203.5 154.7 206.2 148.0 209.0 C141.3 211.8 137.2 214.8 135.0 216.0" stroke="#5c6868" stroke-width="3.6" fill="none" stroke-linecap="round" stroke-linejoin="round"/>
<path d="M313.6 0.0 C308.5 1.2 290.9 3.7 283.0 7.0 C275.1 10.3 271.0 15.0 266.0 20.0 C261.0 25.0 256.8 30.8 253.0 37.0 C249.2 43.2 245.8 51.2 243.0 57.0 C240.2 62.8 239.3 66.9 236.0 72.0 C232.7 77.1 226.1 79.8 223.0 87.5 C219.9 95.2 218.6 105.7 217.7 118.0 C216.8 130.3 219.1 150.8 217.7 161.5 C216.2 172.2 216.1 175.8 209.0 182.0 C201.9 188.2 185.2 194.5 175.0 199.0 C164.8 203.5 154.7 206.2 148.0 209.0 C141.3 211.8 137.2 214.8 135.0 216.0" stroke="#98a6a8" stroke-width="2.6" fill="none" stroke-linecap="round" stroke-linejoin="round"/>
<path d="M300.0 8.0 C306.7 7.2 323.3 3.3 340.0 3.0 C356.7 2.7 384.7 3.8 400.0 6.0 C415.3 8.2 426.7 14.3 432.0 16.0" stroke="#5c6868" stroke-width="3.4" fill="none" stroke-linecap="round" stroke-linejoin="round"/>
<path d="M300.0 8.0 C306.7 7.2 323.3 3.3 340.0 3.0 C356.7 2.7 384.7 3.8 400.0 6.0 C415.3 8.2 426.7 14.3 432.0 16.0" stroke="#a8b4b4" stroke-width="2.4" fill="none" stroke-linecap="round" stroke-linejoin="round"/>
<path d="M60.0 410.0 C69.2 408.8 101.0 406.0 115.0 403.0 C129.0 400.0 134.4 395.2 144.0 392.0 C153.6 388.8 163.1 385.5 172.7 384.0 C182.3 382.5 191.8 382.5 201.4 383.0 C211.0 383.5 220.4 385.3 230.0 387.0 C239.6 388.7 249.3 391.0 259.0 393.0 C268.7 395.0 278.3 397.0 288.0 399.0 C297.7 401.0 309.8 404.8 317.0 405.0 C324.2 405.2 325.3 399.7 331.0 400.0 C336.7 400.3 344.2 404.4 351.0 407.0 C357.8 409.6 362.5 414.1 371.5 415.5 C380.5 416.9 394.8 416.1 405.0 415.5 C415.2 414.9 428.3 412.6 433.0 412.0" stroke="#5c6868" stroke-width="3.6" fill="none" stroke-linecap="round" stroke-linejoin="round"/>
<path d="M60.0 410.0 C69.2 408.8 101.0 406.0 115.0 403.0 C129.0 400.0 134.4 395.2 144.0 392.0 C153.6 388.8 163.1 385.5 172.7 384.0 C182.3 382.5 191.8 382.5 201.4 383.0 C211.0 383.5 220.4 385.3 230.0 387.0 C239.6 388.7 249.3 391.0 259.0 393.0 C268.7 395.0 278.3 397.0 288.0 399.0 C297.7 401.0 309.8 404.8 317.0 405.0 C324.2 405.2 325.3 399.7 331.0 400.0 C336.7 400.3 344.2 404.4 351.0 407.0 C357.8 409.6 362.5 414.1 371.5 415.5 C380.5 416.9 394.8 416.1 405.0 415.5 C415.2 414.9 428.3 412.6 433.0 412.0" stroke="#d49ab8" stroke-width="2.6" fill="none" stroke-linecap="round" stroke-linejoin="round"/>
<path d="M62.0 0.0 C61.5 3.3 60.3 11.7 59.0 20.0 C57.7 28.3 56.0 39.8 54.0 50.0 C52.0 60.2 50.3 71.3 47.0 81.0 C43.7 90.7 39.7 100.2 34.0 108.0 C28.3 115.8 18.7 123.0 13.0 128.0 C7.3 133.0 2.2 136.3 0.0 138.0" stroke="#3e5a74" stroke-width="4.4" fill="none" stroke-linecap="round" stroke-linejoin="round"/>
<path d="M62.0 0.0 C61.5 3.3 60.3 11.7 59.0 20.0 C57.7 28.3 56.0 39.8 54.0 50.0 C52.0 60.2 50.3 71.3 47.0 81.0 C43.7 90.7 39.7 100.2 34.0 108.0 C28.3 115.8 18.7 123.0 13.0 128.0 C7.3 133.0 2.2 136.3 0.0 138.0" stroke="#5a9edc" stroke-width="3.4" fill="none" stroke-linecap="round" stroke-linejoin="round"/>
<path d="M59.0 32.0 C61.2 34.0 68.3 39.3 72.0 44.0 C75.7 48.7 76.7 56.2 81.0 60.0 C85.3 63.8 92.5 67.0 98.0 67.0 C103.5 67.0 109.7 62.2 114.0 60.0 C118.3 57.8 122.3 55.0 124.0 54.0" stroke="#5c6868" stroke-width="3.6" fill="none" stroke-linecap="round" stroke-linejoin="round"/>
<path d="M59.0 32.0 C61.2 34.0 68.3 39.3 72.0 44.0 C75.7 48.7 76.7 56.2 81.0 60.0 C85.3 63.8 92.5 67.0 98.0 67.0 C103.5 67.0 109.7 62.2 114.0 60.0 C118.3 57.8 122.3 55.0 124.0 54.0" stroke="#f284b4" stroke-width="2.6" fill="none" stroke-linecap="round" stroke-linejoin="round"/>
<path d="M124.0 57.0 C128.0 60.3 141.2 70.2 148.0 77.0 C154.8 83.8 162.2 92.3 165.0 98.0 C167.8 103.7 166.7 104.8 165.0 111.0 C163.3 117.2 158.3 125.5 155.0 135.0 C151.7 144.5 147.8 156.8 145.0 168.0 C142.2 179.2 140.0 194.0 138.0 202.0 C136.0 210.0 135.2 209.2 133.0 216.0 C130.8 222.8 128.6 233.4 125.0 243.0 C121.4 252.6 117.2 261.7 111.5 273.5 C105.8 285.3 98.3 299.9 91.0 314.0 C83.7 328.1 73.8 343.9 67.6 358.0 C61.4 372.1 56.8 386.0 54.0 398.5 C51.2 411.0 51.2 427.2 50.7 433.0" stroke="#5c6868" stroke-width="3.4" fill="none" stroke-linecap="round" stroke-linejoin="round"/>
<path d="M124.0 57.0 C128.0 60.3 141.2 70.2 148.0 77.0 C154.8 83.8 162.2 92.3 165.0 98.0 C167.8 103.7 166.7 104.8 165.0 111.0 C163.3 117.2 158.3 125.5 155.0 135.0 C151.7 144.5 147.8 156.8 145.0 168.0 C142.2 179.2 140.0 194.0 138.0 202.0 C136.0 210.0 135.2 209.2 133.0 216.0 C130.8 222.8 128.6 233.4 125.0 243.0 C121.4 252.6 117.2 261.7 111.5 273.5 C105.8 285.3 98.3 299.9 91.0 314.0 C83.7 328.1 73.8 343.9 67.6 358.0 C61.4 372.1 56.8 386.0 54.0 398.5 C51.2 411.0 51.2 427.2 50.7 433.0" stroke="#f284b4" stroke-width="2.4" fill="none" stroke-linecap="round" stroke-linejoin="round"/>
<path d="M5.0 128.0 C5.3 129.2 5.8 128.3 7.0 135.0 C8.2 141.7 10.7 154.5 12.0 168.0 C13.3 181.5 13.9 202.3 15.0 216.0 C16.1 229.7 17.8 238.7 18.6 250.0 C19.4 261.3 19.1 272.8 20.0 284.0 C20.9 295.2 24.0 303.0 24.0 317.0 C24.0 331.0 21.2 353.3 20.0 368.0 C18.8 382.7 17.7 394.2 17.0 405.0 C16.3 415.8 16.2 428.3 16.0 433.0" stroke="#5c6868" stroke-width="3.6" fill="none" stroke-linecap="round" stroke-linejoin="round"/>
<path d="M5.0 128.0 C5.3 129.2 5.8 128.3 7.0 135.0 C8.2 141.7 10.7 154.5 12.0 168.0 C13.3 181.5 13.9 202.3 15.0 216.0 C16.1 229.7 17.8 238.7 18.6 250.0 C19.4 261.3 19.1 272.8 20.0 284.0 C20.9 295.2 24.0 303.0 24.0 317.0 C24.0 331.0 21.2 353.3 20.0 368.0 C18.8 382.7 17.7 394.2 17.0 405.0 C16.3 415.8 16.2 428.3 16.0 433.0" stroke="#f284b4" stroke-width="2.6" fill="none" stroke-linecap="round" stroke-linejoin="round"/>
<path d="M0.0 17.0 C3.3 17.7 12.7 19.3 20.0 21.0 C27.3 22.7 37.5 25.2 44.0 27.0 C50.5 28.8 56.5 31.2 59.0 32.0" stroke="#5c6868" stroke-width="3.6" fill="none" stroke-linecap="round" stroke-linejoin="round"/>
<path d="M0.0 17.0 C3.3 17.7 12.7 19.3 20.0 21.0 C27.3 22.7 37.5 25.2 44.0 27.0 C50.5 28.8 56.5 31.2 59.0 32.0" stroke="#f8ba7c" stroke-width="2.6" fill="none" stroke-linecap="round" stroke-linejoin="round"/>
<path d="M5.0 0.0 C4.5 1.0 2.8 4.0 2.0 6.0 C1.2 8.0 0.3 11.0 0.0 12.0" stroke="#5c6868" stroke-width="3.6" fill="none" stroke-linecap="round" stroke-linejoin="round"/>
<path d="M5.0 0.0 C4.5 1.0 2.8 4.0 2.0 6.0 C1.2 8.0 0.3 11.0 0.0 12.0" stroke="#f8ba7c" stroke-width="2.6" fill="none" stroke-linecap="round" stroke-linejoin="round"/>
<path d="M124.0 54.0 C125.7 52.0 130.7 46.5 134.0 42.0 C137.3 37.5 141.3 32.0 144.0 27.0 C146.7 22.0 146.8 15.8 150.0 12.0 C153.2 8.2 156.2 5.8 163.0 4.5 C169.8 3.2 183.3 3.6 191.0 4.5 C198.7 5.4 203.5 7.6 209.0 10.0 C214.5 12.4 220.5 15.8 224.0 19.0 C227.5 22.2 229.2 24.3 230.0 29.0 C230.8 33.7 229.5 41.8 229.0 47.0 C228.5 52.2 228.3 55.8 227.0 60.0 C225.7 64.2 222.8 69.3 221.0 72.0 C219.2 74.7 219.3 72.8 216.0 76.0 C212.7 79.2 205.8 86.8 201.0 91.0 C196.2 95.2 192.5 97.2 187.0 101.0 C181.5 104.8 171.2 111.8 168.0 114.0" stroke="#5c6868" stroke-width="3.6" fill="none" stroke-linecap="round" stroke-linejoin="round"/>
<path d="M124.0 54.0 C125.7 52.0 130.7 46.5 134.0 42.0 C137.3 37.5 141.3 32.0 144.0 27.0 C146.7 22.0 146.8 15.8 150.0 12.0 C153.2 8.2 156.2 5.8 163.0 4.5 C169.8 3.2 183.3 3.6 191.0 4.5 C198.7 5.4 203.5 7.6 209.0 10.0 C214.5 12.4 220.5 15.8 224.0 19.0 C227.5 22.2 229.2 24.3 230.0 29.0 C230.8 33.7 229.5 41.8 229.0 47.0 C228.5 52.2 228.3 55.8 227.0 60.0 C225.7 64.2 222.8 69.3 221.0 72.0 C219.2 74.7 219.3 72.8 216.0 76.0 C212.7 79.2 205.8 86.8 201.0 91.0 C196.2 95.2 192.5 97.2 187.0 101.0 C181.5 104.8 171.2 111.8 168.0 114.0" stroke="#f8ba7c" stroke-width="2.6" fill="none" stroke-linecap="round" stroke-linejoin="round"/>
<path d="M238.7 0.0 C237.8 2.3 234.6 9.8 233.0 14.0 C231.4 18.2 229.7 23.2 229.0 25.0" stroke="#5c6868" stroke-width="3.2" fill="none" stroke-linecap="round" stroke-linejoin="round"/>
<path d="M238.7 0.0 C237.8 2.3 234.6 9.8 233.0 14.0 C231.4 18.2 229.7 23.2 229.0 25.0" stroke="#f8ba7c" stroke-width="2.2" fill="none" stroke-linecap="round" stroke-linejoin="round"/>
<path d="M432.0 17.0 C427.3 17.7 412.5 19.7 404.0 21.0 C395.5 22.3 388.8 25.2 381.0 25.0 C373.2 24.8 366.0 20.6 357.0 19.5 C348.0 18.4 338.2 17.9 327.0 18.5 C315.8 19.1 299.0 20.6 290.0 23.0 C281.0 25.4 278.2 29.9 273.0 33.0 C267.8 36.1 263.8 38.8 259.0 41.6 C254.2 44.4 249.3 47.4 244.5 50.0 C239.7 52.6 232.4 56.2 230.0 57.4" stroke="#5c6868" stroke-width="3.4" fill="none" stroke-linecap="round" stroke-linejoin="round"/>
<path d="M432.0 17.0 C427.3 17.7 412.5 19.7 404.0 21.0 C395.5 22.3 388.8 25.2 381.0 25.0 C373.2 24.8 366.0 20.6 357.0 19.5 C348.0 18.4 338.2 17.9 327.0 18.5 C315.8 19.1 299.0 20.6 290.0 23.0 C281.0 25.4 278.2 29.9 273.0 33.0 C267.8 36.1 263.8 38.8 259.0 41.6 C254.2 44.4 249.3 47.4 244.5 50.0 C239.7 52.6 232.4 56.2 230.0 57.4" stroke="#f8ba7c" stroke-width="2.4" fill="none" stroke-linecap="round" stroke-linejoin="round"/>
<path d="M20.0 226.0 C22.3 228.8 28.8 235.1 34.0 243.0 C39.2 250.9 45.8 264.0 51.0 273.5 C56.2 283.0 61.0 293.2 65.0 300.0 C69.0 306.8 71.5 310.2 75.0 314.0 C78.5 317.8 80.5 319.2 86.0 322.5 C91.5 325.8 100.8 330.2 108.0 334.0 C115.2 337.8 123.0 341.4 129.0 345.0 C135.0 348.6 140.0 353.0 144.0 355.5 C148.0 358.0 149.3 358.1 153.0 360.0 C156.7 361.9 160.7 364.3 166.0 367.0 C171.3 369.7 178.0 372.8 185.0 376.0 C192.0 379.2 204.2 384.3 208.0 386.0" stroke="#5c6868" stroke-width="3.6" fill="none" stroke-linecap="round" stroke-linejoin="round"/>
<path d="M20.0 226.0 C22.3 228.8 28.8 235.1 34.0 243.0 C39.2 250.9 45.8 264.0 51.0 273.5 C56.2 283.0 61.0 293.2 65.0 300.0 C69.0 306.8 71.5 310.2 75.0 314.0 C78.5 317.8 80.5 319.2 86.0 322.5 C91.5 325.8 100.8 330.2 108.0 334.0 C115.2 337.8 123.0 341.4 129.0 345.0 C135.0 348.6 140.0 353.0 144.0 355.5 C148.0 358.0 149.3 358.1 153.0 360.0 C156.7 361.9 160.7 364.3 166.0 367.0 C171.3 369.7 178.0 372.8 185.0 376.0 C192.0 379.2 204.2 384.3 208.0 386.0" stroke="#f8ba7c" stroke-width="2.6" fill="none" stroke-linecap="round" stroke-linejoin="round"/>
<path d="M425.6 216.0 C424.5 217.0 421.3 219.2 419.0 222.0 C416.7 224.8 413.5 228.7 412.0 233.0 C410.5 237.3 411.2 244.3 410.0 248.0 C408.8 251.7 408.0 253.3 405.0 255.0 C402.0 256.7 398.2 255.0 392.0 258.0 C385.8 261.0 378.2 270.4 368.0 273.0 C357.8 275.6 339.8 272.7 331.0 273.5 C322.2 274.3 320.1 275.5 315.0 278.0 C309.9 280.5 306.8 283.9 300.5 288.7 C294.2 293.5 282.6 301.1 277.0 307.0 C271.4 312.9 271.2 319.5 266.7 324.0 C262.2 328.5 256.2 329.5 250.0 334.0 C243.8 338.5 235.2 345.8 229.5 351.0 C223.8 356.2 218.8 361.6 216.0 365.0 C213.2 368.4 214.2 368.0 213.0 371.5 C211.8 375.0 209.3 383.6 208.6 386.0" stroke="#5c6868" stroke-width="3.4" fill="none" stroke-linecap="round" stroke-linejoin="round"/>
<path d="M425.6 216.0 C424.5 217.0 421.3 219.2 419.0 222.0 C416.7 224.8 413.5 228.7 412.0 233.0 C410.5 237.3 411.2 244.3 410.0 248.0 C408.8 251.7 408.0 253.3 405.0 255.0 C402.0 256.7 398.2 255.0 392.0 258.0 C385.8 261.0 378.2 270.4 368.0 273.0 C357.8 275.6 339.8 272.7 331.0 273.5 C322.2 274.3 320.1 275.5 315.0 278.0 C309.9 280.5 306.8 283.9 300.5 288.7 C294.2 293.5 282.6 301.1 277.0 307.0 C271.4 312.9 271.2 319.5 266.7 324.0 C262.2 328.5 256.2 329.5 250.0 334.0 C243.8 338.5 235.2 345.8 229.5 351.0 C223.8 356.2 218.8 361.6 216.0 365.0 C213.2 368.4 214.2 368.0 213.0 371.5 C211.8 375.0 209.3 383.6 208.6 386.0" stroke="#f8ba7c" stroke-width="2.4" fill="none" stroke-linecap="round" stroke-linejoin="round"/>
<path d="M144.0 429.0 C147.6 428.3 158.3 425.7 165.5 425.0 C172.7 424.3 179.8 424.3 187.0 424.6 C194.2 424.9 201.4 425.6 208.6 426.7 C215.8 427.8 226.4 430.3 230.0 431.0" stroke="#5c6868" stroke-width="3.4" fill="none" stroke-linecap="round" stroke-linejoin="round"/>
<path d="M144.0 429.0 C147.6 428.3 158.3 425.7 165.5 425.0 C172.7 424.3 179.8 424.3 187.0 424.6 C194.2 424.9 201.4 425.6 208.6 426.7 C215.8 427.8 226.4 430.3 230.0 431.0" stroke="#f8ba7c" stroke-width="2.4" fill="none" stroke-linecap="round" stroke-linejoin="round"/>
<path d="M0.0 330.0 C1.0 333.3 3.7 342.5 6.0 350.0 C8.3 357.5 10.8 365.0 14.0 375.0 C17.2 385.0 21.7 400.3 25.0 410.0 C28.3 419.7 32.5 429.2 34.0 433.0" stroke="#5c6868" stroke-width="3.2" fill="none" stroke-linecap="round" stroke-linejoin="round"/>
<path d="M0.0 330.0 C1.0 333.3 3.7 342.5 6.0 350.0 C8.3 357.5 10.8 365.0 14.0 375.0 C17.2 385.0 21.7 400.3 25.0 410.0 C28.3 419.7 32.5 429.2 34.0 433.0" stroke="#f8ba7c" stroke-width="2.2" fill="none" stroke-linecap="round" stroke-linejoin="round"/>
<path d="M174 381V433" stroke="#f8dcc0" stroke-width="1.4" stroke-dasharray="3 2"/>
</g>
</svg>

<span class="v abs" style="left:44px;top:505px">2304 fields</span>

<div class="box" style="left:44px;top:526px;width:325px;height:27px"></div>
<!--ROW1ICONS-->
<div class="box" style="left:44px;top:563px;width:174px;height:27px"></div>
<span class="v abs" style="left:79px;top:572px">Intervall:</span>
<div class="abs" style="left:133px;top:569px;width:23px;height:14px;border:1px solid #7b8fd6;background:#fff"><span class="t abs" style="left:2px;top:1px">nie</span></div>
<div class="box" style="left:247px;top:563px;width:122px;height:27px"></div>
<div class="box" style="left:44px;top:601px;width:325px;height:29px"></div>
<span class="redi" style="left:78px;top:608px">i</span>
<span class="abs" style="left:99px;top:606.5px;font-family:'Liberation Serif',serif;font-weight:bold;font-size:16px;line-height:18px;color:#2c3434">P§</span>
<span class="redi" style="left:124px;top:608px">i</span>
<span class="abs" style="left:146px;top:606.5px;font-family:'Liberation Serif',serif;font-weight:bold;font-size:16px;line-height:18px;color:#8a9c9c">U§</span>
<span class="redi" style="left:170px;top:608px">i</span>
<span class="redi" style="left:216px;top:608px">i</span>
<div class="sel" style="left:264px;top:608px;width:97px;height:14px"><span class="t txt" style="top:1px">– Standard –</span><div class="btn" style="height:14px"></div></div>
<!--BOTTOMICONS-->

<!-- rules -->
<div class="v abs" style="left:483px;top:436px;line-height:12px;letter-spacing:0.7px"><span style="color:#e4300c;text-decoration:underline">Regelverletzung!</span><br>- urban area(c.) muß 1.35% betragen!<br>- industry muß absinken!<br>- mine muß absinken!<br>- coniferous forest ist Wert:0.00% Minimum Wert:10%<br>- mixed forest ist Wert:7.99% Minimum Wert:10%<br>- mixed forest muß anwachsen!</div>

<svg width="530" height="372" viewBox="480 60 530 372" style="position:absolute;left:480px;top:60px" font-family="'Liberation Sans', Arial, sans-serif" font-size="10.67" fill="#15155e">
<circle cx="801.5" cy="252" r="21.4" fill="none" stroke="#e1eaea" stroke-width="1"/>
<circle cx="801.5" cy="252" r="42.8" fill="none" stroke="#e1eaea" stroke-width="1"/>
<circle cx="801.5" cy="252" r="64.2" fill="none" stroke="#e1eaea" stroke-width="1"/>
<circle cx="801.5" cy="252" r="85.6" fill="none" stroke="#e1eaea" stroke-width="1"/>
<circle cx="801.5" cy="252" r="107.0" fill="none" stroke="#e1eaea" stroke-width="1"/>
<path transform="translate(801.5 252) rotate(0)" d="M0 0L-13.6 -99L0 -108L13.6 -99Z" fill="#dde8e8"/>
<path transform="translate(801.5 252) rotate(60)" d="M0 0L-13.6 -99L0 -108L13.6 -99Z" fill="#dde8e8"/>
<path transform="translate(801.5 252) rotate(120)" d="M0 0L-13.6 -99L0 -108L13.6 -99Z" fill="#dde8e8"/>
<path transform="translate(801.5 252) rotate(180)" d="M0 0L-13.6 -99L0 -108L13.6 -99Z" fill="#dde8e8"/>
<path transform="translate(801.5 252) rotate(240)" d="M0 0L-13.6 -99L0 -108L13.6 -99Z" fill="#dde8e8"/>
<path transform="translate(801.5 252) rotate(300)" d="M0 0L-13.6 -99L0 -108L13.6 -99Z" fill="#dde8e8"/>
<polygon points="801.5,203.4 862.1,217.0 845.7,277.5 801.5,302.8 753.6,279.6 751.0,222.8" fill="none" stroke="#15155e" stroke-width="1" stroke-dasharray="1 1.4"/>
<polygon points="801.5,199.7 864.0,215.9 845.6,277.4 801.5,319.7 766.7,272.1 757.8,226.8" fill="none" stroke="#10105a" stroke-width="2" stroke-linejoin="miter"/>
<rect x="800.3" y="140.8" width="2.5" height="2.5" fill="#e8341c"/>
<rect x="895.6" y="195.8" width="2.5" height="2.5" fill="#e8341c"/>
<rect x="895.6" y="305.8" width="2.5" height="2.5" fill="#e8341c"/>
<rect x="800.3" y="360.8" width="2.5" height="2.5" fill="#e8341c"/>
<rect x="705.0" y="305.8" width="2.5" height="2.5" fill="#e8341c"/>
<rect x="705.0" y="195.8" width="2.5" height="2.5" fill="#e8341c"/>
<rect x="800.3" y="151.8" width="2.5" height="2.5" fill="#e8341c"/>
<rect x="876.3" y="206.9" width="2.5" height="2.5" fill="#e8341c"/>
<rect x="886.0" y="300.3" width="2.5" height="2.5" fill="#e8341c"/>
<rect x="800.3" y="349.8" width="2.5" height="2.5" fill="#e8341c"/>
<rect x="714.1" y="300.6" width="2.5" height="2.5" fill="#e8341c"/>
<rect x="800.9" y="251.4" width="1.2" height="1.2" fill="#e8341c"/>
<text x="801.5" y="107" text-anchor="middle">Human health</text>
<text x="801.5" y="120" text-anchor="middle">and well being</text>
<text x="666" y="159" text-anchor="middle">CC Mitigation</text>
<text x="666" y="172" text-anchor="middle">(drought,</text>
<text x="666" y="185" text-anchor="middle">erosion,</text>
<text x="666" y="198" text-anchor="middle">flooding)</text>
<text x="936.8" y="159" text-anchor="middle">Aesthetical</text>
<text x="936.8" y="172" text-anchor="middle">value</text>
<text x="936.8" y="185" text-anchor="middle">(recreation,</text>
<text x="936.8" y="198" text-anchor="middle">tourism)</text>
<text x="936.8" y="315.5" text-anchor="middle">Ecological</text>
<text x="936.8" y="328.5" text-anchor="middle">functioning</text>
<text x="936.8" y="341.5" text-anchor="middle">(species,</text>
<text x="936.8" y="354.5" text-anchor="middle">structures)</text>
<text x="666" y="321" text-anchor="middle">Bioressource</text>
<text x="666" y="334" text-anchor="middle">provision</text>
<text x="666" y="347" text-anchor="middle">(biomass, food)</text>
<text x="801.5" y="393" text-anchor="middle">Economic</text>
<text x="801.5" y="406" text-anchor="middle">wealth (income,</text>
<text x="801.5" y="419" text-anchor="middle">work)</text>
<text x="501" y="83" fill="#dfe7e7">© PiSolution GmbH</text>
<path d="M526 111.4L539.7 124.5L526.3 223.4H525.7L512.7 124.5Z" fill="#dde8e8"/>
<text x="545.4" y="122.5">Max.</text>
<text x="545.4" y="222.5">Min.</text>
<rect x="516" y="258" width="20" height="20" fill="#fff" stroke="#10105a" stroke-width="2"/>
<text x="545.4" y="272.8">Simulation</text>
<rect x="515.5" y="297.5" width="21" height="20.5" fill="none" stroke="#15155e" stroke-width="1" stroke-dasharray="1 1" shape-rendering="crispEdges"/>
<text x="545.4" y="312.8">Referenz</text>
<rect x="937.5" y="72.5" width="16" height="16" fill="#fff" stroke="#3c4a4a" stroke-width="1.2"/>
<path d="M945.5 74.3L951.7 80.5L945.5 86.7L939.3 80.5Z M945.5 77.4L948.6 80.5L945.5 83.6L942.4 80.5Z" fill="none" stroke="#3c4a4a" stroke-width="0.8"/><rect x="945" y="80" width="1" height="1" fill="#3c4a4a"/>
<path d="M960.2 86.8L973 74" stroke="#3c4a4a" stroke-width="1"/><rect x="962.3" y="76.3" width="2.4" height="2.4" fill="none" stroke="#3c4a4a" stroke-width="0.8"/><rect x="968.3" y="82.3" width="2.4" height="2.4" fill="none" stroke="#3c4a4a" stroke-width="0.8"/>
<rect x="981" y="74" width="13" height="13" fill="#3c4a4a"/>
<g shape-rendering="crispEdges"><rect x="982" y="75.0" width="3.4" height="1.6" fill="#fff"/><rect x="986.4" y="75.0" width="2" height="1.6" fill="#fff"/><rect x="989.4" y="75.0" width="3.6" height="1.6" fill="#fff"/></g>
<g shape-rendering="crispEdges"><rect x="982" y="77.4" width="3.4" height="1.6" fill="#fff"/><rect x="986.4" y="77.4" width="2" height="1.6" fill="#fff"/><rect x="989.4" y="77.4" width="3.6" height="1.6" fill="#fff"/></g>
<g shape-rendering="crispEdges"><rect x="982" y="79.8" width="3.4" height="1.6" fill="#fff"/><rect x="986.4" y="79.8" width="2" height="1.6" fill="#fff"/><rect x="989.4" y="79.8" width="3.6" height="1.6" fill="#fff"/></g>
<g shape-rendering="crispEdges"><rect x="982" y="82.2" width="3.4" height="1.6" fill="#fff"/><rect x="986.4" y="82.2" width="2" height="1.6" fill="#fff"/><rect x="989.4" y="82.2" width="3.6" height="1.6" fill="#fff"/></g>
<g shape-rendering="crispEdges"><rect x="982" y="84.6" width="3.4" height="1.6" fill="#fff"/><rect x="986.4" y="84.6" width="2" height="1.6" fill="#fff"/><rect x="989.4" y="84.6" width="3.6" height="1.6" fill="#fff"/></g>
</svg>

<!-- results -->
<table class="res"><tr><td colspan="3" style="width:200px;height:32px;position:relative"><span class="v" style="position:absolute;left:31px;top:11px">Originalkarte ein/ausblenden</span></td></tr>
<tr><td colspan="3" style="height:18px;text-align:center"><span class="vb">Resultate:</span></td></tr>
<tr><td style="width:111px;height:18px"><span class="vb" style="padding-left:3px">2020 + conversion</span></td><td style="width:70px"><span class="v" style="padding-left:4px">02.11.2010</span></td><td style="width:17px;text-align:center"><span class="x">✖</span></td></tr>
<tr><td style="height:18px"><span class="vb" style="padding-left:3px">scenario 2020</span></td><td><span class="v" style="padding-left:4px">02.11.2010</span></td><td style="text-align:center"><span class="x">✖</span></td></tr>
<tr><td style="height:18px"><span class="vb" style="padding-left:3px">scenario 2020</span></td><td><span class="v" style="padding-left:4px">02.11.2010</span></td><td style="text-align:center"><span class="x">✖</span></td></tr>
</table>
<span class="v abs" style="left:942.5px;top:548.5px;color:#7c9898;font-size:10px;letter-spacing:1.25px">1 - 3 [3]</span>
<svg width="1010" height="642" viewBox="0 0 1010 642" style="position:absolute;left:0;top:0;pointer-events:none">
<defs><linearGradient id="gdoc" x1="0" x2="1"><stop offset="0" stop-color="#dfe5e5"/><stop offset="1" stop-color="#ffffff"/></linearGradient><linearGradient id="ggr" x1="0" x2="0" y1="0" y2="1"><stop offset="0" stop-color="#8ed03c"/><stop offset="1" stop-color="#4ea01c"/></linearGradient></defs>
<path d="M19 80.5H24.5L27.3 83.3V91.4Q27.3 92.4 26.3 92.4H19Q18.2 92.4 18.2 91.4V81.3Q18.2 80.5 19 80.5Z" fill="url(#gdoc)" stroke="#8c9a9a" stroke-width="0.9"/>
<path d="M24.5 80.5V83.3H27.3" fill="#fff" stroke="#8c9a9a" stroke-width="0.7"/>
<path d="M24.2 85.7H29.4V83.3L33.9 87.2L29.4 91.4V88.7H24.2Z" fill="url(#ggr)"/>
<path d="M16.2 103.6H29V116.2H16.2Z" fill="#fff" stroke="#2a2a2a" stroke-width="1.1"/>
<path d="M18.6 103.6H27.3V108.6Q27.3 109 26.8 109H19.1Q18.6 109 18.6 108.6Z" fill="#e6eaea" stroke="#6a7676" stroke-width="0.8"/>
<rect x="23" y="105" width="1.6" height="3" fill="#222"/>
<path d="M27.4 109.7H31.5V114H33.9L29.5 121.8L25 114H27.4Z" fill="#fff" stroke="#2a2a2a" stroke-width="1.1" stroke-linejoin="miter"/>
<rect x="15.3" y="129.2" width="19" height="19.5" fill="#eef2f2"/>
<path d="M19.2 131.5H29.2L31.8 134.1V146.3H19.2Z" fill="#fff" stroke="#111" stroke-width="1.2"/>
<path d="M29.2 131.5V134.1H31.8Z" fill="#e82010" stroke="#111" stroke-width="0.6"/>
<rect x="16.2" y="133.2" width="11" height="3.3" fill="#f02412" stroke="#111" stroke-width="0.8"/>
<path d="M24.6 137.2V141.2L20.2 145.2M24.6 141.2L31 142.6M24.6 141.2L23 143" fill="none" stroke="#f0406a" stroke-width="1.1"/>
<rect x="15.3" y="155.2" width="19.4" height="19.4" fill="#a9b5b5"/>
<rect x="16.10" y="156.00" width="2.9" height="2.9" fill="#d2bcf8"/>
<rect x="19.86" y="156.00" width="2.9" height="2.9" fill="#d2bcf8"/>
<rect x="23.62" y="156.00" width="2.9" height="2.9" fill="#fbf8da"/>
<rect x="27.38" y="156.00" width="2.9" height="2.9" fill="#fbf8da"/>
<rect x="31.14" y="156.00" width="2.9" height="2.9" fill="#fbf8da"/>
<rect x="16.10" y="159.76" width="2.9" height="2.9" fill="#fbf8da"/>
<rect x="19.86" y="159.76" width="2.9" height="2.9" fill="#fbf8da"/>
<rect x="23.62" y="159.76" width="2.9" height="2.9" fill="#fbf8da"/>
<rect x="27.38" y="159.76" width="2.9" height="2.9" fill="#fbf8da"/>
<rect x="31.14" y="159.76" width="2.9" height="2.9" fill="#fbf8da"/>
<rect x="16.10" y="163.52" width="2.9" height="2.9" fill="#fbf8da"/>
<rect x="19.86" y="163.52" width="2.9" height="2.9" fill="#fbf8da"/>
<rect x="23.62" y="163.52" width="2.9" height="2.9" fill="#fbf8da"/>
<rect x="27.38" y="163.52" width="2.9" height="2.9" fill="#fbf8da"/>
<rect x="31.14" y="163.52" width="2.9" height="2.9" fill="#d8f4e8"/>
<rect x="16.10" y="167.28" width="2.9" height="2.9" fill="#90e264"/>
<rect x="19.86" y="167.28" width="2.9" height="2.9" fill="#fbf8da"/>
<rect x="23.62" y="167.28" width="2.9" height="2.9" fill="#fbf8da"/>
<rect x="27.38" y="167.28" width="2.9" height="2.9" fill="#fbf8da"/>
<rect x="31.14" y="167.28" width="2.9" height="2.9" fill="#fbf8da"/>
<rect x="16.10" y="171.04" width="2.9" height="2.9" fill="#fbf8da"/>
<rect x="19.86" y="171.04" width="2.9" height="2.9" fill="#90e264"/>
<rect x="23.62" y="171.04" width="2.9" height="2.9" fill="#fbf8da"/>
<rect x="27.38" y="171.04" width="2.9" height="2.9" fill="#fbf8da"/>
<rect x="31.14" y="171.04" width="2.9" height="2.9" fill="#fbf8da"/>
<path d="M19 159.6L31.3 171.6M31.3 159.6L19 171.6" stroke="#5a1408" stroke-width="4" stroke-linecap="round"/>
<path d="M19 159.6L31.3 171.6M31.3 159.6L19 171.6" stroke="#f62c12" stroke-width="2.8" stroke-linecap="round"/>
<circle cx="25" cy="191" r="8.2" fill="#2a3636"/>
<path d="M23.6 190H26.2Q29 190 29 192.8Q29 194.6 27.6 195.8" fill="none" stroke="#fff" stroke-width="2.3"/>
<path d="M20.2 190L24.2 186.4V193.6Z" fill="#fff"/>
<circle cx="20.9" cy="214.9" r="4.7" fill="#fff" stroke="#111" stroke-width="1.5"/>
<path d="M25 218.3L33.6 224.1" stroke="#111" stroke-width="2.7" stroke-linecap="round"/>
<path d="M18 214.9H23.8" stroke="#111" stroke-width="1.8"/>
<circle cx="20.9" cy="240.9" r="4.7" fill="#fff" stroke="#111" stroke-width="1.5"/>
<path d="M25 244.3L33.6 250.1" stroke="#111" stroke-width="2.7" stroke-linecap="round"/>
<path d="M18 240.9H23.8" stroke="#111" stroke-width="1.8"/>
<path d="M20.9 212V217.8" stroke="#111" stroke-width="1.8"/>
<path d="M16.5 259.4V275.5M19.6 259.4V275.5M22.6 259.4V275.5M25.7 259.4V275.5M28.8 259.4V275.5M15 261H30.8M15 264H30.8M15 267.1H30.8M15 270.3H30.8M15 273.5H30.8" stroke="#111" stroke-width="1.1"/>
<rect x="25.6" y="269.7" width="8" height="8.2" fill="#f42a14" stroke="#111" stroke-width="0.9"/>
<path d="M29.6 270.4L30.9 272.3L28.3 272.3ZM29.6 277.3L30.9 275.3L28.3 275.3ZM26.2 273.8L27.8 272.6V275ZM33 273.8L31.4 272.6V275Z" fill="#fff" opacity="0.9"/>
<text x="19.6" y="295.6" font-family="'DejaVu Sans',Verdana,sans-serif" font-size="10" fill="#111">1</text>
<text x="26.8" y="293" font-family="'DejaVu Sans',Verdana,sans-serif" font-size="7" font-weight="bold" fill="#111">2</text>
<rect x="55.2" y="530.4" width="19.4" height="19.4" fill="#a9b5b5" stroke="#111" stroke-width="1.2"/>
<rect x="56.20" y="531.40" width="2.8" height="2.8" fill="#d2bcf8"/>
<rect x="59.90" y="531.40" width="2.8" height="2.8" fill="#d2bcf8"/>
<rect x="63.60" y="531.40" width="2.8" height="2.8" fill="#fbf8da"/>
<rect x="67.30" y="531.40" width="2.8" height="2.8" fill="#fbf8da"/>
<rect x="71.00" y="531.40" width="2.8" height="2.8" fill="#fbf8da"/>
<rect x="56.20" y="535.10" width="2.8" height="2.8" fill="#fbf8da"/>
<rect x="59.90" y="535.10" width="2.8" height="2.8" fill="#fbf8da"/>
<rect x="63.60" y="535.10" width="2.8" height="2.8" fill="#fbf8da"/>
<rect x="67.30" y="535.10" width="2.8" height="2.8" fill="#fbf8da"/>
<rect x="71.00" y="535.10" width="2.8" height="2.8" fill="#fbf8da"/>
<rect x="56.20" y="538.80" width="2.8" height="2.8" fill="#fbf8da"/>
<rect x="59.90" y="538.80" width="2.8" height="2.8" fill="#fbf8da"/>
<rect x="67.30" y="538.80" width="2.8" height="2.8" fill="#fbf8da"/>
<rect x="71.00" y="538.80" width="2.8" height="2.8" fill="#d8f4e8"/>
<rect x="56.20" y="542.50" width="2.8" height="2.8" fill="#98e670"/>
<rect x="59.90" y="542.50" width="2.8" height="2.8" fill="#98e670"/>
<rect x="63.60" y="542.50" width="2.8" height="2.8" fill="#fbf8da"/>
<rect x="67.30" y="542.50" width="2.8" height="2.8" fill="#d8f4e8"/>
<rect x="71.00" y="542.50" width="2.8" height="2.8" fill="#fbf8da"/>
<rect x="56.20" y="546.20" width="2.8" height="2.8" fill="#fbf8da"/>
<rect x="59.90" y="546.20" width="2.8" height="2.8" fill="#98e670"/>
<rect x="63.60" y="546.20" width="2.8" height="2.8" fill="#fbf8da"/>
<rect x="67.30" y="546.20" width="2.8" height="2.8" fill="#fbf8da"/>
<rect x="71.00" y="546.20" width="2.8" height="2.8" fill="#fbf8da"/>
<rect x="63.3" y="538.5" width="3.6" height="3.6" fill="#f42a14" stroke="#111" stroke-width="1"/>
<rect x="85.3" y="530.4" width="19.4" height="19.4" fill="#dbe5e5" stroke="#c4d2d2" stroke-width="1"/>
<rect x="93.80" y="531.50" width="2.7" height="2.7" fill="#fff"/>
<rect x="97.50" y="531.50" width="2.7" height="2.7" fill="#fff"/>
<rect x="101.20" y="531.50" width="2.7" height="2.7" fill="#fff"/>
<rect x="90.10" y="535.20" width="2.7" height="2.7" fill="#fff"/>
<rect x="97.50" y="535.20" width="2.7" height="2.7" fill="#fff"/>
<rect x="101.20" y="535.20" width="2.7" height="2.7" fill="#fff"/>
<rect x="86.40" y="538.90" width="2.7" height="2.7" fill="#fff"/>
<rect x="90.10" y="538.90" width="2.7" height="2.7" fill="#fff"/>
<rect x="97.50" y="538.90" width="2.7" height="2.7" fill="#fff"/>
<rect x="101.20" y="538.90" width="2.7" height="2.7" fill="#fff"/>
<rect x="93.80" y="542.60" width="2.7" height="2.7" fill="#fff"/>
<rect x="97.50" y="542.60" width="2.7" height="2.7" fill="#fff"/>
<rect x="101.20" y="542.60" width="2.7" height="2.7" fill="#fff"/>
<rect x="90.10" y="546.30" width="2.7" height="2.7" fill="#fff"/>
<rect x="93.80" y="546.30" width="2.7" height="2.7" fill="#fff"/>
<rect x="97.50" y="546.30" width="2.7" height="2.7" fill="#fff"/>
<rect x="101.20" y="546.30" width="2.7" height="2.7" fill="#fff"/>
<path d="M92 534Q96 531 98 535Q101 538 98 541Q94 543 92 540Z" fill="none" stroke="#c0cece" stroke-width="1"/>
<rect x="115.4" y="530.4" width="19.3" height="19.4" fill="#fff" stroke="#d3dfdf" stroke-width="1"/>
<path d="M127 534.5H131.5V542.5H123V538.5H127ZM127 538.5H131.5M127 538.5V542.5" fill="#f4f8f8" stroke="#cbd9d9" stroke-width="1"/>
<rect x="145.4" y="530.4" width="19.3" height="19.4" fill="#fff" stroke="#d3dfdf" stroke-width="1"/>
<path d="M153.5 534.5H161.5V538.5H153.5ZM157.5 534.5V538.5M149.5 542.5H157.5V546.5H149.5ZM153.5 542.5V546.5" fill="#eef4f4" stroke="#cbd9d9" stroke-width="1"/>
<clipPath id="c5"><rect x="175.5" y="530.5" width="19" height="19"/></clipPath>
<rect x="175.5" y="530.5" width="19" height="19" fill="#fff"/>
<g clip-path="url(#c5)"><path d="M174 548L195 527" stroke="#8c9c9c" stroke-width="9"/><path d="M174 548L195 527" stroke="#f2f6f6" stroke-width="6"/><path d="M174 548L195 527" stroke="#7c8c8c" stroke-width="1" stroke-dasharray="3.5 2.5"/></g>
<rect x="175.5" y="530.5" width="19" height="19" fill="none" stroke="#667676" stroke-width="1.2"/>
<rect x="205.5" y="530.5" width="19" height="19" fill="#8a9a9a"/>
<rect x="206.50" y="531.50" width="2.6" height="2.6" fill="#fff"/>
<rect x="210.20" y="531.50" width="2.6" height="2.6" fill="#fff"/>
<rect x="213.90" y="531.50" width="2.6" height="2.6" fill="#fff"/>
<rect x="217.60" y="531.50" width="2.6" height="2.6" fill="#fff"/>
<rect x="221.30" y="531.50" width="2.6" height="2.6" fill="#fff"/>
<rect x="206.50" y="535.20" width="2.6" height="2.6" fill="#fff"/>
<rect x="210.20" y="535.20" width="2.6" height="2.6" fill="#fff"/>
<rect x="213.90" y="535.20" width="2.6" height="2.6" fill="#fff"/>
<rect x="217.60" y="535.20" width="2.6" height="2.6" fill="#fff"/>
<rect x="221.30" y="535.20" width="2.6" height="2.6" fill="#fff"/>
<rect x="206.50" y="538.90" width="2.6" height="2.6" fill="#fff"/>
<rect x="210.20" y="538.90" width="2.6" height="2.6" fill="#fff"/>
<rect x="213.90" y="538.90" width="2.6" height="2.6" fill="#fff"/>
<rect x="217.60" y="538.90" width="2.6" height="2.6" fill="#fff"/>
<rect x="221.30" y="538.90" width="2.6" height="2.6" fill="#fff"/>
<rect x="206.50" y="542.60" width="2.6" height="2.6" fill="#fff"/>
<rect x="210.20" y="542.60" width="2.6" height="2.6" fill="#fff"/>
<rect x="213.90" y="542.60" width="2.6" height="2.6" fill="#fff"/>
<rect x="217.60" y="542.60" width="2.6" height="2.6" fill="#fff"/>
<rect x="221.30" y="542.60" width="2.6" height="2.6" fill="#fff"/>
<rect x="206.50" y="546.30" width="2.6" height="2.6" fill="#fff"/>
<rect x="210.20" y="546.30" width="2.6" height="2.6" fill="#fff"/>
<rect x="213.90" y="546.30" width="2.6" height="2.6" fill="#fff"/>
<rect x="217.60" y="546.30" width="2.6" height="2.6" fill="#fff"/>
<rect x="221.30" y="546.30" width="2.6" height="2.6" fill="#fff"/>
<clipPath id="c6"><rect x="205.5" y="530.5" width="19" height="19"/></clipPath>
<g clip-path="url(#c6)"><path d="M204 549Q212 547 213.5 541Q214.5 535 219 534Q223 533.5 226 530" fill="none" stroke="#5e6e6e" stroke-width="5.6"/><path d="M204 549Q212 547 213.5 541Q214.5 535 219 534Q223 533.5 226 530" fill="none" stroke="#869494" stroke-width="4.2"/></g>
<rect x="205.5" y="530.5" width="19" height="19" fill="none" stroke="#566666" stroke-width="1.2"/>
<rect x="235.5" y="530.5" width="19" height="19" fill="#8a9a9a"/>
<rect x="236.50" y="531.50" width="2.6" height="2.6" fill="#fff"/>
<rect x="240.20" y="531.50" width="2.6" height="2.6" fill="#fff"/>
<rect x="243.90" y="531.50" width="2.6" height="2.6" fill="#fff"/>
<rect x="247.60" y="531.50" width="2.6" height="2.6" fill="#fff"/>
<rect x="251.30" y="531.50" width="2.6" height="2.6" fill="#fff"/>
<rect x="236.50" y="535.20" width="2.6" height="2.6" fill="#fff"/>
<rect x="240.20" y="535.20" width="2.6" height="2.6" fill="#fff"/>
<rect x="243.90" y="535.20" width="2.6" height="2.6" fill="#fff"/>
<rect x="247.60" y="535.20" width="2.6" height="2.6" fill="#fff"/>
<rect x="251.30" y="535.20" width="2.6" height="2.6" fill="#fff"/>
<rect x="236.50" y="538.90" width="2.6" height="2.6" fill="#fff"/>
<rect x="240.20" y="538.90" width="2.6" height="2.6" fill="#fff"/>
<rect x="243.90" y="538.90" width="2.6" height="2.6" fill="#fff"/>
<rect x="247.60" y="538.90" width="2.6" height="2.6" fill="#fff"/>
<rect x="251.30" y="538.90" width="2.6" height="2.6" fill="#fff"/>
<rect x="236.50" y="542.60" width="2.6" height="2.6" fill="#fff"/>
<rect x="240.20" y="542.60" width="2.6" height="2.6" fill="#fff"/>
<rect x="243.90" y="542.60" width="2.6" height="2.6" fill="#fff"/>
<rect x="247.60" y="542.60" width="2.6" height="2.6" fill="#fff"/>
<rect x="251.30" y="542.60" width="2.6" height="2.6" fill="#fff"/>
<rect x="236.50" y="546.30" width="2.6" height="2.6" fill="#fff"/>
<rect x="240.20" y="546.30" width="2.6" height="2.6" fill="#fff"/>
<rect x="243.90" y="546.30" width="2.6" height="2.6" fill="#fff"/>
<rect x="247.60" y="546.30" width="2.6" height="2.6" fill="#fff"/>
<rect x="251.30" y="546.30" width="2.6" height="2.6" fill="#fff"/>
<path d="M239.5 535L243 533.5L248 534.5L251 537L250 540L251.5 544L248 546.5L244 545L241 546L238.5 542L239.5 539Z" fill="#9cacac" stroke="#6e7e7e" stroke-width="0.8"/>
<rect x="235.5" y="530.5" width="19" height="19" fill="none" stroke="#566666" stroke-width="1.2"/>
<rect x="265.5" y="530.5" width="19" height="19" fill="#5e6c6c"/>
<rect x="266.50" y="531.50" width="2.6" height="2.6" fill="#7c8a8a"/>
<rect x="270.20" y="531.50" width="2.6" height="2.6" fill="#7c8a8a"/>
<rect x="273.90" y="531.50" width="2.6" height="2.6" fill="#7c8a8a"/>
<rect x="277.60" y="531.50" width="2.6" height="2.6" fill="#7c8a8a"/>
<rect x="281.30" y="531.50" width="2.6" height="2.6" fill="#7c8a8a"/>
<rect x="266.50" y="535.20" width="2.6" height="2.6" fill="#7c8a8a"/>
<rect x="270.20" y="535.20" width="2.6" height="2.6" fill="#7c8a8a"/>
<rect x="273.90" y="535.20" width="2.6" height="2.6" fill="#7c8a8a"/>
<rect x="277.60" y="535.20" width="2.6" height="2.6" fill="#7c8a8a"/>
<rect x="281.30" y="535.20" width="2.6" height="2.6" fill="#7c8a8a"/>
<rect x="266.50" y="538.90" width="2.6" height="2.6" fill="#7c8a8a"/>
<rect x="270.20" y="538.90" width="2.6" height="2.6" fill="#7c8a8a"/>
<rect x="273.90" y="538.90" width="2.6" height="2.6" fill="#7c8a8a"/>
<rect x="277.60" y="538.90" width="2.6" height="2.6" fill="#7c8a8a"/>
<rect x="281.30" y="538.90" width="2.6" height="2.6" fill="#7c8a8a"/>
<rect x="266.50" y="542.60" width="2.6" height="2.6" fill="#7c8a8a"/>
<rect x="270.20" y="542.60" width="2.6" height="2.6" fill="#7c8a8a"/>
<rect x="273.90" y="542.60" width="2.6" height="2.6" fill="#7c8a8a"/>
<rect x="277.60" y="542.60" width="2.6" height="2.6" fill="#7c8a8a"/>
<rect x="281.30" y="542.60" width="2.6" height="2.6" fill="#7c8a8a"/>
<rect x="266.50" y="546.30" width="2.6" height="2.6" fill="#7c8a8a"/>
<rect x="270.20" y="546.30" width="2.6" height="2.6" fill="#7c8a8a"/>
<rect x="273.90" y="546.30" width="2.6" height="2.6" fill="#7c8a8a"/>
<rect x="277.60" y="546.30" width="2.6" height="2.6" fill="#7c8a8a"/>
<rect x="281.30" y="546.30" width="2.6" height="2.6" fill="#7c8a8a"/>
<ellipse cx="275.5" cy="540" rx="5.6" ry="4.8" fill="#b4c4c4" opacity="0.85"/>
<rect x="265.5" y="530.5" width="19" height="19" fill="none" stroke="#4e5c5c" stroke-width="1.2"/>
<rect x="285.5" y="530.5" width="19" height="19" fill="#fff" stroke="#c6d4d4" stroke-width="1"/><path d="M289 539.6H301" stroke="#111" stroke-width="1.3"/>
<rect x="315.5" y="530.5" width="19" height="19" fill="#fff" stroke="#7e8e8e" stroke-width="1.1"/>
<circle cx="325" cy="540" r="9.2" fill="none" stroke="#9cacac" stroke-width="0.9"/><circle cx="325" cy="540" r="5.4" fill="none" stroke="#9cacac" stroke-width="0.9"/><circle cx="325" cy="540" r="1.9" fill="#a8bcbc"/>
<rect x="335.5" y="530.5" width="19" height="19" fill="#fff" stroke="#c6d4d4" stroke-width="1"/><path d="M339 539.6H351" stroke="#111" stroke-width="1.3"/>
<path d="M59.94 575.40L62.94 570.22Q64.10 568.20 64.93 569.64L65.51 570.65" fill="none" stroke="#1f7c1f" stroke-width="3.6" stroke-linejoin="round" stroke-linecap="butt"/>
<path d="M62.48 572.40L67.67 574.39L68.54 568.90Z" fill="#1f7c1f"/>
<path d="M68.26 575.40L71.25 580.58Q72.41 582.60 70.75 582.60L69.59 582.60" fill="none" stroke="#1f7c1f" stroke-width="3.6" stroke-linejoin="round" stroke-linecap="butt"/>
<path d="M69.59 579.10L65.26 582.60L69.59 586.10Z" fill="#1f7c1f"/>
<path d="M64.10 582.60L58.11 582.60Q55.79 582.60 56.62 581.16L57.20 580.15" fill="none" stroke="#1f7c1f" stroke-width="3.6" stroke-linejoin="round" stroke-linecap="butt"/>
<path d="M60.23 581.90L59.36 576.41L54.17 578.40Z" fill="#1f7c1f"/>
<rect x="325.5" y="568.5" width="19" height="17" fill="#fff" stroke="#eef4f4" stroke-width="1"/><rect x="345.5" y="568.5" width="19" height="17" fill="#fff" stroke="#eef4f4" stroke-width="1"/>
<path d="M331 573.5V577.5H334.8M331.4 577.2Q333.6 573.4 337.4 574.4Q340.2 575.8 338.8 579Q338 580.6 336.4 581.4" fill="none" stroke="#aec6c6" stroke-width="1.5"/>
<path d="M359.4 573.5V577.5H355.6M359 577.2Q356.8 573.4 353 574.4Q350.2 575.8 351.6 579Q352.4 580.6 354 581.4" fill="none" stroke="#aec6c6" stroke-width="1.5"/>
<rect x="54.6" y="608.3" width="4" height="16" fill="#f23018" stroke="#111" stroke-width="0.9"/><rect x="69.4" y="608.3" width="4" height="16" fill="#5ed82c" stroke="#111" stroke-width="0.9"/>
<path d="M54.6 611.5H58.6M54.6 614.7H58.6M54.6 617.9H58.6M54.6 621.1H58.6M69.4 611.5H73.4M69.4 614.7H73.4M69.4 617.9H73.4M69.4 621.1H73.4" stroke="#111" stroke-width="0.7"/>
<path d="M60 613H67.6M65.2 610.4L68 613L65.2 615.6M68 619.6H60.4M62.8 617L60 619.6L62.8 622.2" fill="none" stroke="#111" stroke-width="1.1"/>
<polygon points="201.7,607.0 204.0,613.4 210.8,613.6 205.4,617.8 207.3,624.4 201.7,620.5 196.1,624.4 198.0,617.8 192.6,613.6 199.4,613.4" fill="#fff" stroke="#222" stroke-width="1.3" stroke-linejoin="miter"/>
<path d="M201.7 607.0L201.7 616.6L204.0 613.4Z" fill="#444"/>
<path d="M210.8 613.6L201.7 616.6L205.4 617.8Z" fill="#444"/>
<path d="M207.3 624.4L201.7 616.6L201.7 620.5Z" fill="#444"/>
<path d="M196.1 624.4L201.7 616.6L198.0 617.8Z" fill="#444"/>
<path d="M192.6 613.6L201.7 616.6L199.4 613.4Z" fill="#444"/>
<circle cx="249.9" cy="615.6" r="8.4" fill="#fff" stroke="#111" stroke-width="1.4"/><path d="M250 609.6V616L247 620.4" fill="none" stroke="#111" stroke-width="1.2"/>
<rect x="799" y="442" width="19.6" height="19.4" fill="#98a4a4"/>
<rect x="800.00" y="443.00" width="2.9" height="2.9" fill="#9a7cf0"/>
<rect x="803.74" y="443.00" width="2.9" height="2.9" fill="#b89cf4"/>
<rect x="807.48" y="443.00" width="2.9" height="2.9" fill="#f6f09c"/>
<rect x="811.22" y="443.00" width="2.9" height="2.9" fill="#f6f09c"/>
<rect x="814.96" y="443.00" width="2.9" height="2.9" fill="#f6f09c"/>
<rect x="800.00" y="446.70" width="2.9" height="2.9" fill="#c8acf8"/>
<rect x="803.74" y="446.70" width="2.9" height="2.9" fill="#f6f09c"/>
<rect x="807.48" y="446.70" width="2.9" height="2.9" fill="#f6f09c"/>
<rect x="811.22" y="446.70" width="2.9" height="2.9" fill="#f6f09c"/>
<rect x="814.96" y="446.70" width="2.9" height="2.9" fill="#f6f09c"/>
<rect x="800.00" y="450.40" width="2.9" height="2.9" fill="#f6f09c"/>
<rect x="803.74" y="450.40" width="2.9" height="2.9" fill="#f6f09c"/>
<rect x="807.48" y="450.40" width="2.9" height="2.9" fill="#f6f09c"/>
<rect x="811.22" y="450.40" width="2.9" height="2.9" fill="#f6f09c"/>
<rect x="814.96" y="450.40" width="2.9" height="2.9" fill="#c8f0e0"/>
<rect x="800.00" y="454.10" width="2.9" height="2.9" fill="#5cd424"/>
<rect x="803.74" y="454.10" width="2.9" height="2.9" fill="#78dc3c"/>
<rect x="807.48" y="454.10" width="2.9" height="2.9" fill="#f6f09c"/>
<rect x="811.22" y="454.10" width="2.9" height="2.9" fill="#c8f0e0"/>
<rect x="814.96" y="454.10" width="2.9" height="2.9" fill="#f6f09c"/>
<rect x="800.00" y="457.80" width="2.9" height="2.9" fill="#8ce450"/>
<rect x="803.74" y="457.80" width="2.9" height="2.9" fill="#f6f09c"/>
<rect x="807.48" y="457.80" width="2.9" height="2.9" fill="#f6f09c"/>
<rect x="811.22" y="457.80" width="2.9" height="2.9" fill="#f6f09c"/>
<rect x="814.96" y="457.80" width="2.9" height="2.9" fill="#f6f09c"/>
<path d="M871.8 550V558" stroke="#f9a2d2" stroke-width="2"/><path d="M879 550L874.6 554L879 558" fill="none" stroke="#f9a2d2" stroke-width="1.3"/>
<path d="M889 550L885.4 554L889 558M893.4 550L889.8 554L893.4 558" fill="none" stroke="#f9a2d2" stroke-width="1.3"/>
<path d="M899 550L902.6 554L899 558M903.4 550L907 554L903.4 558" fill="none" stroke="#f9a2d2" stroke-width="1.3"/>
<path d="M920.4 550V558" stroke="#f9a2d2" stroke-width="2"/><path d="M913 550L917.4 554L913 558" fill="none" stroke="#f9a2d2" stroke-width="1.3"/>
</svg>
</body></html>
